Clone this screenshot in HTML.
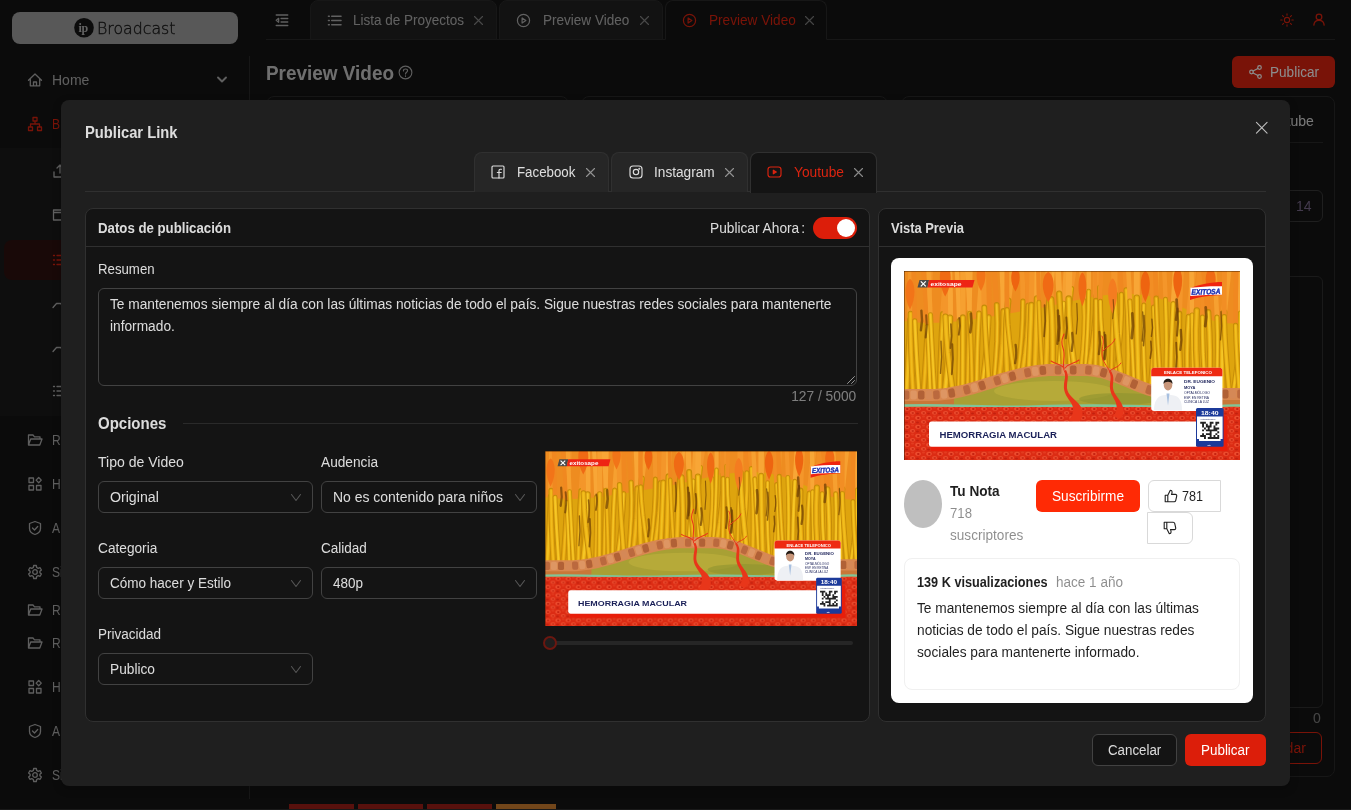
<!DOCTYPE html>
<html lang="es">
<head>
<meta charset="utf-8">
<title>Publicar Link</title>
<style>
*{box-sizing:border-box;margin:0;padding:0}
html,body{width:1351px;height:811px;overflow:hidden;background:#141414}
body{will-change:transform;font-family:"Liberation Sans",sans-serif;font-size:14px;color:rgba(255,255,255,.85);position:relative}
svg{display:block;overflow:visible}
.t{position:absolute;white-space:nowrap;line-height:22px;font-size:14px;transform-origin:0 0}
.ic{position:absolute;fill:none;stroke:currentColor;stroke-width:1.3;stroke-linecap:round;stroke-linejoin:round}
/* ---------- page behind ---------- */
#page{position:absolute;left:0;top:0;width:1351px;height:811px;background:#141414;color:rgba(255,255,255,.65)}
#side{position:absolute;left:0;top:0;width:250px;height:799px}
#sideb{position:absolute;left:249px;top:56px;width:1px;height:743px;background:#2b2b2b}
#logo{position:absolute;left:12px;top:12px;width:226px;height:32px;border-radius:8px;background:#a0a0a0;color:#141414}
#sub{position:absolute;left:0;top:148px;width:249px;height:268px;background:#1a1a1a}
#sel{position:absolute;left:4px;top:240px;width:241px;height:40px;border-radius:8px;background:#2f1210}
.mi{position:absolute;left:0;width:249px;height:40px}
.mi .ic{left:27px;top:12px;width:16px;height:16px}
.mi .t{left:52px;top:9px}
.si .ic{left:52px}
.red{color:#dc2410}
#hdr{position:absolute;left:266px;top:0;width:1069px;height:40px;border-bottom:1px solid #2b2b2b}
.tab{position:absolute;top:0;height:40px;border:1px solid #2b2b2b;border-radius:8px 8px 0 0;background:#212121}
.tab.act{background:#141414;border-bottom-color:#141414}
.tab .ic{top:12px;width:15px;height:15px}
.tab .t{top:8px}
.bcard{position:absolute;top:96px;height:681px;border:1px solid #2b2b2b;border-radius:8px;background:#141414}
#pubbtn{position:absolute;left:1232px;top:56px;width:103px;height:32px;border-radius:6px;background:#dc2410;color:#fff}
#mask{position:absolute;left:0;top:0;width:1351px;height:811px;background:rgba(0,0,0,.45)}
#bot1{position:absolute;left:0;top:809px;width:1351px;height:1px;background:#1a1a1a}
#bot2{position:absolute;left:0;top:810px;width:1351px;height:1px;background:#fff}
</style>
<style>
.T3,.T4,.T5,.T6,.T7,.T8,.T9,.T10,.T11,.T12{transform:scaleX(.86)}
.T1{transform:scaleX(1.0170)}
.T29{transform:scaleX(0.9800)}
.T13{transform:scaleX(0.9638)}
.T14{transform:scaleX(0.9669)}
.T15{transform:scaleX(0.9725)}
.T16{transform:scaleX(0.9463)}
.T17{transform:scaleX(0.9685)}
.T22{transform:scaleX(0.9197)}
.T23{transform:scaleX(0.9498)}
.T24{transform:scaleX(0.9751)}
.T25{transform:scaleX(0.9828)}
.T26{transform:scaleX(0.9445)}
.T27{transform:scaleX(0.9799)}
.T28{transform:scaleX(0.9446)}
.T30{transform:scaleX(0.9823)}
.T31{transform:scaleX(0.9382)}
.T32{transform:scaleX(1.0020)}
.T33{transform:scaleX(1.0114)}
.T34{transform:scaleX(0.9779)}
.T35{transform:scaleX(0.9973)}
.T36{transform:scaleX(0.9769)}
.T37{transform:scaleX(0.9658)}
.T38{transform:scaleX(0.9645)}
.T39{transform:scaleX(0.9629)}
.T40{transform:scaleX(0.9637)}
.T41{transform:scaleX(0.9799)}
.T42{transform:scaleX(0.9224)}
.T43{transform:scaleX(0.9083)}
.T44{transform:scaleX(0.9418)}
.T45{transform:scaleX(0.9713)}
.T46{transform:scaleX(0.9742)}
.T47{transform:scaleX(0.8990)}
.T48{transform:scaleX(0.9064)}
.T49{transform:scaleX(0.9669)}
.T50{transform:scaleX(0.9794)}
.T51{transform:scaleX(0.9513)}
.T52{transform:scaleX(0.9586)}
</style>
</head>
<body>
<div id="page">
  <div id="side">
    <div id="sideb"></div>
    <div id="logo">
      <svg class="ic" style="left:62px;top:6px;width:20px;height:20px;stroke:none" viewBox="0 0 20 20"><circle cx="10" cy="9.800" r="9.800" fill="#161616"/></svg>
      <span class="t T0" style="left:66.500px;top:5px;font-family:'Liberation Serif',serif;font-size:12px;font-weight:bold;color:#b4b4b4;letter-spacing:-.3px">ip</span>
      <span class="t T1" id="brand" style="left:84.500px;top:6px;font-family:'DejaVu Sans','Liberation Sans',sans-serif;font-weight:200;font-size:15.500px;color:#1c1c1c;-webkit-text-stroke:.35px #1c1c1c">Broadcast</span>
    </div>
    <div id="sub"></div>
    <div id="sel"></div>
    <div class="mi" style="top:60px">
      <svg class="ic" viewBox="0 0 16 16"><path d="M1.5 8.2 8 2l6.500 6.200M3.300 7v6.800h9.400V7M6.500 13.800V10h3v3.800"/></svg>
      <span class="t T2">Home</span>
      <svg class="ic" style="left:217px;top:16px;width:10px;height:8px;stroke-width:1.9" viewBox="0 0 10 8"><path d="M1 1.500 5 5.500 9 1.500"/></svg>
    </div>
    <div class="mi red" style="top:104px">
      <svg class="ic" viewBox="0 0 16 16"><path d="M6 1.500h4v3.500H6zM1.500 11h4v3.500h-4zM10.500 11h4v3.500h-4zM8 5v3M3.500 11V8h9v3"/></svg>
      <span class="t T3">B</span>
    </div>
    <div class="mi si" style="top:151px"><svg class="ic" viewBox="0 0 16 16"><path d="M2 9v5h12V9M8 10V2M5 5l3-3 3 3"/></svg></div>
    <div class="mi si" style="top:195px"><svg class="ic" viewBox="0 0 16 16"><path d="M1.500 3h13v10h-13zM1.500 5.500h13"/></svg></div>
    <div class="mi si red" style="top:240px"><svg class="ic" viewBox="0 0 16 16"><path d="M5 3.500h10M5 8h10M5 12.500h10M1.500 3.500h1M1.500 8h1M1.500 12.500h1"/></svg></div>
    <div class="mi si" style="top:284px"><svg class="ic" viewBox="0 0 16 16"><path d="M1 11.500 4.500 7.500h4l2.500 2.500 4-4.500"/></svg></div>
    <div class="mi si" style="top:328px"><svg class="ic" viewBox="0 0 16 16"><path d="M1 11.500 4.500 7.500h4l2.500 2.500 4-4.500"/></svg></div>
    <div class="mi si" style="top:371px"><svg class="ic" viewBox="0 0 16 16"><path d="M5 3.500h10M5 8h10M5 12.500h10M1.500 3.500h1M1.500 8h1M1.500 12.500h1"/></svg></div>
    <div class="mi" style="top:420px"><svg class="ic" viewBox="0 0 16 16"><path d="M1.500 13V3h4.500l1.500 1.800h5.500V7M1.500 13l2.200-6h11.300l-2.200 6z"/></svg><span class="t T4">R</span></div>
    <div class="mi" style="top:464px"><svg class="ic" viewBox="0 0 16 16"><path d="M2 2h4.500v4.500H2zM2 9.500h4.500V14H2zM9.500 9.500H14V14H9.500zM11.700 1.500l2.600 2.600-2.600 2.600-2.600-2.600z"/></svg><span class="t T5">H</span></div>
    <div class="mi" style="top:508px"><svg class="ic" viewBox="0 0 16 16"><path d="M8 1.500 2.500 3.500v5c0 3 2.500 5 5.500 6 3-1 5.500-3 5.500-6v-5zM5.500 8l2 2 3.200-3.500"/></svg><span class="t T6">A</span></div>
    <div class="mi" style="top:552px"><svg class="ic" viewBox="0 0 16 16"><circle cx="8" cy="8" r="2.300"/><path d="M6.700 1.500h2.600l.4 2 1.500.9 1.900-.7 1.300 2.300-1.500 1.300v1.400l1.500 1.300-1.300 2.300-1.900-.7-1.500.9-.4 2H6.700l-.4-2-1.500-.9-1.900.7-1.300-2.300 1.500-1.300V7.300L1.600 6l1.300-2.300 1.900.7 1.500-.9z"/></svg><span class="t T7">Si</span></div>
    <div class="mi" style="top:590px"><svg class="ic" viewBox="0 0 16 16"><path d="M1.500 13V3h4.500l1.500 1.800h5.500V7M1.500 13l2.200-6h11.300l-2.200 6z"/></svg><span class="t T8">R</span></div>
    <div class="mi" style="top:623px"><svg class="ic" viewBox="0 0 16 16"><path d="M1.500 13V3h4.500l1.500 1.800h5.500V7M1.500 13l2.200-6h11.300l-2.200 6z"/></svg><span class="t T9">R</span></div>
    <div class="mi" style="top:667px"><svg class="ic" viewBox="0 0 16 16"><path d="M2 2h4.500v4.500H2zM2 9.500h4.500V14H2zM9.500 9.500H14V14H9.500zM11.700 1.500l2.600 2.600-2.600 2.600-2.600-2.600z"/></svg><span class="t T10">H</span></div>
    <div class="mi" style="top:711px"><svg class="ic" viewBox="0 0 16 16"><path d="M8 1.500 2.500 3.500v5c0 3 2.500 5 5.500 6 3-1 5.500-3 5.500-6v-5zM5.500 8l2 2 3.200-3.500"/></svg><span class="t T11">A</span></div>
    <div class="mi" style="top:755px"><svg class="ic" viewBox="0 0 16 16"><circle cx="8" cy="8" r="2.300"/><path d="M6.700 1.500h2.600l.4 2 1.500.9 1.900-.7 1.300 2.300-1.500 1.300v1.400l1.500 1.300-1.300 2.300-1.900-.7-1.500.9-.4 2H6.700l-.4-2-1.500-.9-1.900.7-1.300-2.300 1.500-1.300V7.300L1.600 6l1.300-2.300 1.900.7 1.500-.9z"/></svg><span class="t T12">Si</span></div>
  </div>
  <div id="hdr">
    <svg class="ic" style="left:9px;top:14px;width:14px;height:12.500px;stroke-width:1.400" viewBox="0 0 14 13"><path d="M1 1h12M6 4.700h7M6 8.300h7M1 12h12M3.500 4.500 1 6.500l2.500 2z"/></svg>
    <div class="tab" style="left:44px;width:187px">
      <svg class="ic" style="left:16px;stroke-width:1.500" viewBox="0 0 16 16"><path d="M5 3.500h10M5 8h10M5 12.500h10M1.500 3.500h1M1.500 8h1M1.500 12.500h1"/></svg>
      <span class="t T13" style="left:42px">Lista de Proyectos</span>
      <svg class="ic" style="left:163px;top:15px;width:9px;height:9px;color:rgba(255,255,255,.45);stroke-width:1.1" viewBox="0 0 9 9"><path d="M.5.500l8 8M8.500.500l-8 8"/></svg>
    </div>
    <div class="tab" style="left:233px;width:164px">
      <svg class="ic" style="left:16px" viewBox="0 0 16 16"><circle cx="8" cy="8" r="6.500"/><path d="M6.500 5.300v5.400L10.500 8z"/></svg>
      <span class="t T14" style="left:43px">Preview Video</span>
      <svg class="ic" style="left:140px;top:15px;width:9px;height:9px;color:rgba(255,255,255,.45);stroke-width:1.1" viewBox="0 0 9 9"><path d="M.5.500l8 8M8.500.500l-8 8"/></svg>
    </div>
    <div class="tab act" style="left:399px;width:162px">
      <svg class="ic red" style="left:16px" viewBox="0 0 16 16"><circle cx="8" cy="8" r="6.500"/><path d="M6.500 5.300v5.400L10.500 8z"/></svg>
      <span class="t T15 red" style="left:43px">Preview Video</span>
      <svg class="ic" style="left:139px;top:15px;width:9px;height:9px;color:rgba(255,255,255,.45);stroke-width:1.1" viewBox="0 0 9 9"><path d="M.5.500l8 8M8.500.500l-8 8"/></svg>
    </div>
    <svg class="ic red" style="left:1014px;top:13px;width:14px;height:14px;stroke-width:1.250" viewBox="0 0 16 16"><circle cx="8" cy="8" r="3"/><path d="M8 .800v1.700M8 13.500v1.700M.800 8h1.700M13.500 8h1.700M2.900 2.900l1.200 1.200M11.900 11.900l1.200 1.200M2.900 13.100l1.200-1.200M11.900 4.100l1.200-1.200"/></svg>
    <svg class="ic red" style="left:1047px;top:13px;width:12px;height:13px;stroke-width:1.500" viewBox="0 0 14 15"><circle cx="7" cy="4.500" r="3.300"/><path d="M1 14c.3-3.500 2.800-5.500 6-5.500s5.700 2 6 5.500"/></svg>
  </div>
  <span class="t T16" id="h1" style="left:266px;top:59px;font-size:20px;line-height:28px;font-weight:bold;color:rgba(255,255,255,.78)">Preview Video</span>
  <svg class="ic" style="left:398px;top:65px;width:15px;height:15px;stroke-width:1.200" viewBox="0 0 16 16"><circle cx="8" cy="8" r="6.800"/><path d="M5.800 6.300c0-1.300 1-2.100 2.200-2.100s2.200.8 2.200 2c0 1.500-2.200 1.600-2.200 3.300M8 11.500v.6"/></svg>
  <div id="pubbtn">
    <svg class="ic" style="left:17px;top:9px;width:13px;height:14px;stroke-width:1.200" viewBox="0 0 13 14"><circle cx="10.500" cy="2.500" r="1.800"/><circle cx="2.500" cy="7" r="1.800"/><circle cx="10.500" cy="11.500" r="1.800"/><path d="M4.100 6.100l4.800-2.700M4.100 7.900l4.800 2.700"/></svg>
    <span class="t T17" style="left:38px;top:5px">Publicar</span>
  </div>
  <div class="bcard" style="left:266px;width:303px"></div>
  <div class="bcard" style="left:581px;width:307px"></div>
  <div class="bcard" style="left:901px;width:434px">
    <span class="t T18" style="left:361px;top:13px;color:rgba(255,255,255,.85)">Youtube</span>
    <div style="position:absolute;left:12px;top:45px;width:409px;height:1px;background:#2b2b2b"></div>
    <div style="position:absolute;left:300px;top:93px;width:121px;height:32px;border:1px solid #3a3a3a;border-radius:6px"></div>
    <span class="t T19" style="left:394px;top:98px;color:#7a6a8c">14</span>
    <div style="position:absolute;left:12px;top:179px;width:409px;height:432px;border:1px solid #303030;border-radius:6px"></div>
    <span class="t T20" style="left:411px;top:610px;color:rgba(255,255,255,.45)">0</span>
    <div style="position:absolute;left:329px;top:635px;width:91px;height:32px;border:1px solid #dc2410;border-radius:6px"></div>
    <span class="t T21 red" style="left:352.500px;top:640px">Guardar</span>
  </div>
  <div style="position:absolute;left:289px;top:804px;width:65px;height:5px;background:#a02018"></div>
  <div style="position:absolute;left:358px;top:804px;width:65px;height:5px;background:#a02018"></div>
  <div style="position:absolute;left:427px;top:804px;width:65px;height:5px;background:#a02018"></div>
  <div style="position:absolute;left:496px;top:804px;width:60px;height:5px;background:#d08030"></div>
</div>
<div id="mask"></div>
<div id="bot1"></div><div id="bot2"></div>
<svg width="0" height="0" style="position:absolute"><defs>
<pattern id="cells" width="11" height="9" patternUnits="userSpaceOnUse"><rect width="11" height="9" fill="#dc2c14"/><ellipse cx="3" cy="2.800" rx="2.800" ry="2" fill="#ec4c2e"/><ellipse cx="3.300" cy="3" rx="1.300" ry=".9" fill="#c4200e"/><ellipse cx="8.500" cy="6.800" rx="2.600" ry="1.900" fill="#ea4a2c"/><ellipse cx="8.800" cy="7" rx="1.200" ry=".8" fill="#c4200e"/><ellipse cx="8.500" cy="1.500" rx="1.500" ry="1" fill="#e43c20"/><ellipse cx="2.500" cy="7.500" rx="1.500" ry="1" fill="#c4200e"/></pattern>
<clipPath id="vclip"><rect width="336" height="189"/></clipPath>
<symbol id="vid" viewBox="0 0 336 189">
<g clip-path="url(#vclip)">
<rect width="336" height="189" fill="#dea40e"/>
<path d="M0 0H336V52C300 56 280 30 240 24S160 34 120 40 40 56 0 50z" fill="#ee8c20"/>
<path d="M-1.6 -2.0 -2.9 26.2 -3.7 52.3" stroke="#f28e24" stroke-width="5.1" fill="none"/>
<path d="M-3.7 52.3L-3.8 69.0L-3.7 85.6L-3.4 102.2L-3.0 118.8" stroke="#c68c08" stroke-width="5.7" fill="none" stroke-linecap="round"/>
<path d="M-3.7 52.3L-3.8 69.0L-3.7 85.6L-3.4 102.2L-3.0 118.8" stroke="#ecb214" stroke-width="3.7" fill="none" stroke-linecap="round"/>
<path d="M-3.7 52.3L-3.8 69.0L-3.7 85.6L-3.4 102.2L-3.0 118.8" stroke="#f6c826" stroke-width="1.7" fill="none" stroke-linecap="round" opacity=".75"/>
<path d="M7.6 -2.0 7.0 24.6 6.3 49.1" stroke="#f6a030" stroke-width="6.0" fill="none"/>
<path d="M6.3 49.1L5.6 66.5L4.7 83.9L3.7 101.3L2.6 118.7" stroke="#c68c08" stroke-width="6.6" fill="none" stroke-linecap="round"/>
<path d="M6.3 49.1L5.6 66.5L4.7 83.9L3.7 101.3L2.6 118.7" stroke="#e8aa10" stroke-width="4.4" fill="none" stroke-linecap="round"/>
<path d="M6.3 49.1L5.6 66.5L4.7 83.9L3.7 101.3L2.6 118.7" stroke="#f6c826" stroke-width="2.1" fill="none" stroke-linecap="round" opacity=".75"/>
<path d="M7.8 -2.0 7.0 21.3 6.6 42.7" stroke="#f4962a" stroke-width="5.2" fill="none"/>
<path d="M6.6 42.7L6.6 62.1L7.1 81.5L7.9 100.9L9.0 120.2" stroke="#c68c08" stroke-width="5.8" fill="none" stroke-linecap="round"/>
<path d="M6.6 42.7L6.6 62.1L7.1 81.5L7.9 100.9L9.0 120.2" stroke="#e8aa10" stroke-width="3.8" fill="none" stroke-linecap="round"/>
<path d="M6.6 42.7L6.6 62.1L7.1 81.5L7.9 100.9L9.0 120.2" stroke="#f4c222" stroke-width="1.8" fill="none" stroke-linecap="round" opacity=".75"/>
<path d="M9.6 -2.0 10.1 25.0 10.8 49.9" stroke="#f08820" stroke-width="4.6" fill="none"/>
<path d="M10.8 49.9L11.6 67.2L12.5 84.5L13.6 101.8L14.7 119.1" stroke="#c68c08" stroke-width="5.2" fill="none" stroke-linecap="round"/>
<path d="M10.8 49.9L11.6 67.2L12.5 84.5L13.6 101.8L14.7 119.1" stroke="#f0b818" stroke-width="3.3" fill="none" stroke-linecap="round"/>
<path d="M10.8 49.9L11.6 67.2L12.5 84.5L13.6 101.8L14.7 119.1" stroke="#f8ce2e" stroke-width="1.6" fill="none" stroke-linecap="round" opacity=".75"/>
<path d="M26.1 -2.0 25.1 24.7 24.0 49.3" stroke="#f4962a" stroke-width="5.5" fill="none"/>
<path d="M24.0 49.3L23.1 67.0L22.1 84.8L20.9 102.5L19.7 120.2" stroke="#c68c08" stroke-width="6.1" fill="none" stroke-linecap="round"/>
<path d="M24.0 49.3L23.1 67.0L22.1 84.8L20.9 102.5L19.7 120.2" stroke="#e4a40e" stroke-width="3.9" fill="none" stroke-linecap="round"/>
<path d="M24.0 49.3L23.1 67.0L22.1 84.8L20.9 102.5L19.7 120.2" stroke="#f4c222" stroke-width="1.9" fill="none" stroke-linecap="round" opacity=".75"/>
<path d="M19.2 -2.0 21.5 27.7 23.4 55.4" stroke="#f08820" stroke-width="4.4" fill="none"/>
<path d="M23.4 55.4L24.3 71.6L25.0 87.7L25.6 103.9L26.1 120.1" stroke="#c68c08" stroke-width="5.0" fill="none" stroke-linecap="round"/>
<path d="M23.4 55.4L24.3 71.6L25.0 87.7L25.6 103.9L26.1 120.1" stroke="#ecb214" stroke-width="3.2" fill="none" stroke-linecap="round"/>
<path d="M23.4 55.4L24.3 71.6L25.0 87.7L25.6 103.9L26.1 120.1" stroke="#f8ce2e" stroke-width="1.5" fill="none" stroke-linecap="round" opacity=".75"/>
<path d="M24.5 -2.0 25.5 21.8 26.5 43.7" stroke="#f6a030" stroke-width="4.4" fill="none"/>
<path d="M26.5 43.7L27.4 62.4L28.4 81.2L29.4 100.0L30.5 118.8" stroke="#c68c08" stroke-width="5.0" fill="none" stroke-linecap="round"/>
<path d="M26.5 43.7L27.4 62.4L28.4 81.2L29.4 100.0L30.5 118.8" stroke="#ecb214" stroke-width="3.2" fill="none" stroke-linecap="round"/>
<path d="M26.5 43.7L27.4 62.4L28.4 81.2L29.4 100.0L30.5 118.8" stroke="#f8ce2e" stroke-width="1.5" fill="none" stroke-linecap="round" opacity=".75"/>
<path d="M42.5 -2.0 40.5 21.6 39.0 43.2" stroke="#f4962a" stroke-width="5.6" fill="none"/>
<path d="M39.0 43.2L37.8 62.4L37.0 81.5L36.3 100.6L35.8 119.8" stroke="#c68c08" stroke-width="6.2" fill="none" stroke-linecap="round"/>
<path d="M39.0 43.2L37.8 62.4L37.0 81.5L36.3 100.6L35.8 119.8" stroke="#e4a40e" stroke-width="4.0" fill="none" stroke-linecap="round"/>
<path d="M39.0 43.2L37.8 62.4L37.0 81.5L36.3 100.6L35.8 119.8" stroke="#f6c826" stroke-width="1.9" fill="none" stroke-linecap="round" opacity=".75"/>
<path d="M45.1 -2.0 45.8 23.4 45.9 46.8" stroke="#f8a636" stroke-width="6.2" fill="none"/>
<path d="M45.9 46.8L45.4 65.0L44.4 83.2L42.9 101.4L41.1 119.6" stroke="#c68c08" stroke-width="6.8" fill="none" stroke-linecap="round"/>
<path d="M45.9 46.8L45.4 65.0L44.4 83.2L42.9 101.4L41.1 119.6" stroke="#ecb214" stroke-width="4.4" fill="none" stroke-linecap="round"/>
<path d="M45.9 46.8L45.4 65.0L44.4 83.2L42.9 101.4L41.1 119.6" stroke="#f8ce2e" stroke-width="2.1" fill="none" stroke-linecap="round" opacity=".75"/>
<path d="M41.6 -2.0 41.2 22.8 41.4 45.5" stroke="#f4962a" stroke-width="5.5" fill="none"/>
<path d="M41.4 45.5L42.3 63.6L43.8 81.7L45.9 99.8L48.4 117.9" stroke="#c68c08" stroke-width="6.1" fill="none" stroke-linecap="round"/>
<path d="M41.4 45.5L42.3 63.6L43.8 81.7L45.9 99.8L48.4 117.9" stroke="#ecb214" stroke-width="4.0" fill="none" stroke-linecap="round"/>
<path d="M41.4 45.5L42.3 63.6L43.8 81.7L45.9 99.8L48.4 117.9" stroke="#f4c222" stroke-width="1.9" fill="none" stroke-linecap="round" opacity=".75"/>
<path d="M52.8 -2.0 54.3 24.8 55.2 49.6" stroke="#f8a636" stroke-width="4.5" fill="none"/>
<path d="M55.2 49.6L55.4 66.5L55.3 83.5L55.0 100.4L54.5 117.4" stroke="#c68c08" stroke-width="5.1" fill="none" stroke-linecap="round"/>
<path d="M55.2 49.6L55.4 66.5L55.3 83.5L55.0 100.4L54.5 117.4" stroke="#e4a40e" stroke-width="3.3" fill="none" stroke-linecap="round"/>
<path d="M55.2 49.6L55.4 66.5L55.3 83.5L55.0 100.4L54.5 117.4" stroke="#f4c222" stroke-width="1.5" fill="none" stroke-linecap="round" opacity=".75"/>
<path d="M58.9 -2.0 58.9 23.2 58.9 46.3" stroke="#f6a030" stroke-width="5.3" fill="none"/>
<path d="M58.9 46.3L58.8 63.5L58.8 80.8L58.7 98.0L58.6 115.2" stroke="#c68c08" stroke-width="5.9" fill="none" stroke-linecap="round"/>
<path d="M58.9 46.3L58.8 63.5L58.8 80.8L58.7 98.0L58.6 115.2" stroke="#eaae12" stroke-width="3.8" fill="none" stroke-linecap="round"/>
<path d="M58.9 46.3L58.8 63.5L58.8 80.8L58.7 98.0L58.6 115.2" stroke="#f6c826" stroke-width="1.8" fill="none" stroke-linecap="round" opacity=".75"/>
<path d="M66.4 -2.0 65.8 20.6 65.3 41.1" stroke="#f8a636" stroke-width="4.6" fill="none"/>
<path d="M65.3 41.1L64.9 59.4L64.4 77.6L64.0 95.8L63.6 114.0" stroke="#c68c08" stroke-width="5.2" fill="none" stroke-linecap="round"/>
<path d="M65.3 41.1L64.9 59.4L64.4 77.6L64.0 95.8L63.6 114.0" stroke="#e4a40e" stroke-width="3.3" fill="none" stroke-linecap="round"/>
<path d="M65.3 41.1L64.9 59.4L64.4 77.6L64.0 95.8L63.6 114.0" stroke="#f4c222" stroke-width="1.6" fill="none" stroke-linecap="round" opacity=".75"/>
<path d="M63.0 -2.0 64.5 21.1 65.7 42.2" stroke="#f8a636" stroke-width="4.3" fill="none"/>
<path d="M65.7 42.2L66.6 60.2L67.2 78.1L67.7 96.1L68.1 114.0" stroke="#c68c08" stroke-width="4.9" fill="none" stroke-linecap="round"/>
<path d="M65.7 42.2L66.6 60.2L67.2 78.1L67.7 96.1L68.1 114.0" stroke="#e8aa10" stroke-width="3.1" fill="none" stroke-linecap="round"/>
<path d="M65.7 42.2L66.6 60.2L67.2 78.1L67.7 96.1L68.1 114.0" stroke="#f4c222" stroke-width="1.4" fill="none" stroke-linecap="round" opacity=".75"/>
<path d="M78.4 -2.0 76.5 21.2 75.0 42.4" stroke="#f6a030" stroke-width="5.1" fill="none"/>
<path d="M75.0 42.4L74.1 59.8L73.4 77.2L73.0 94.6L72.7 112.0" stroke="#c68c08" stroke-width="5.7" fill="none" stroke-linecap="round"/>
<path d="M75.0 42.4L74.1 59.8L73.4 77.2L73.0 94.6L72.7 112.0" stroke="#e8aa10" stroke-width="3.7" fill="none" stroke-linecap="round"/>
<path d="M75.0 42.4L74.1 59.8L73.4 77.2L73.0 94.6L72.7 112.0" stroke="#f8ce2e" stroke-width="1.7" fill="none" stroke-linecap="round" opacity=".75"/>
<path d="M84.5 -2.0 85.0 23.1 84.7 46.2" stroke="#f08820" stroke-width="5.2" fill="none"/>
<path d="M84.7 46.2L83.9 62.0L82.5 77.9L80.8 93.7L78.8 109.5" stroke="#c68c08" stroke-width="5.8" fill="none" stroke-linecap="round"/>
<path d="M84.7 46.2L83.9 62.0L82.5 77.9L80.8 93.7L78.8 109.5" stroke="#e8aa10" stroke-width="3.8" fill="none" stroke-linecap="round"/>
<path d="M84.7 46.2L83.9 62.0L82.5 77.9L80.8 93.7L78.8 109.5" stroke="#f8ce2e" stroke-width="1.8" fill="none" stroke-linecap="round" opacity=".75"/>
<path d="M79.5 -2.0 79.8 18.3 80.3 36.5" stroke="#f4962a" stroke-width="5.2" fill="none"/>
<path d="M80.3 36.5L81.0 54.7L82.0 72.9L83.3 91.0L84.6 109.2" stroke="#c68c08" stroke-width="5.8" fill="none" stroke-linecap="round"/>
<path d="M80.3 36.5L81.0 54.7L82.0 72.9L83.3 91.0L84.6 109.2" stroke="#ecb214" stroke-width="3.7" fill="none" stroke-linecap="round"/>
<path d="M80.3 36.5L81.0 54.7L82.0 72.9L83.3 91.0L84.6 109.2" stroke="#f4c222" stroke-width="1.8" fill="none" stroke-linecap="round" opacity=".75"/>
<path d="M89.9 -2.0 91.6 16.9 92.7 33.8" stroke="#f08820" stroke-width="5.1" fill="none"/>
<path d="M92.7 33.8L93.3 52.1L93.0 70.4L91.9 88.7L90.5 107.0" stroke="#c68c08" stroke-width="5.7" fill="none" stroke-linecap="round"/>
<path d="M92.7 33.8L93.3 52.1L93.0 70.4L91.9 88.7L90.5 107.0" stroke="#e4a40e" stroke-width="3.7" fill="none" stroke-linecap="round"/>
<path d="M92.7 33.8L93.3 52.1L93.0 70.4L91.9 88.7L90.5 107.0" stroke="#f8ce2e" stroke-width="1.7" fill="none" stroke-linecap="round" opacity=".75"/>
<path d="M98.6 -2.0 99.5 20.2 99.7 40.4" stroke="#f8a636" stroke-width="6.2" fill="none"/>
<path d="M99.7 40.4L99.4 56.5L98.5 72.5L97.2 88.5L95.6 104.5" stroke="#c68c08" stroke-width="6.8" fill="none" stroke-linecap="round"/>
<path d="M99.7 40.4L99.4 56.5L98.5 72.5L97.2 88.5L95.6 104.5" stroke="#e4a40e" stroke-width="4.5" fill="none" stroke-linecap="round"/>
<path d="M99.7 40.4L99.4 56.5L98.5 72.5L97.2 88.5L95.6 104.5" stroke="#f4c222" stroke-width="2.1" fill="none" stroke-linecap="round" opacity=".75"/>
<path d="M108.6 -2.0 106.1 14.8 104.2 29.7" stroke="#f6a030" stroke-width="5.9" fill="none"/>
<path d="M104.2 29.7L102.6 47.5L102.0 65.3L102.3 83.1L103.0 101.0" stroke="#c68c08" stroke-width="6.5" fill="none" stroke-linecap="round"/>
<path d="M104.2 29.7L102.6 47.5L102.0 65.3L102.3 83.1L103.0 101.0" stroke="#eaae12" stroke-width="4.2" fill="none" stroke-linecap="round"/>
<path d="M104.2 29.7L102.6 47.5L102.0 65.3L102.3 83.1L103.0 101.0" stroke="#f4c222" stroke-width="2.0" fill="none" stroke-linecap="round" opacity=".75"/>
<path d="M102.9 -2.0 102.8 19.4 103.1 38.7" stroke="#f08820" stroke-width="4.8" fill="none"/>
<path d="M103.1 38.7L104.0 54.0L105.5 69.3L107.4 84.5L109.6 99.8" stroke="#c68c08" stroke-width="5.4" fill="none" stroke-linecap="round"/>
<path d="M103.1 38.7L104.0 54.0L105.5 69.3L107.4 84.5L109.6 99.8" stroke="#e8aa10" stroke-width="3.5" fill="none" stroke-linecap="round"/>
<path d="M103.1 38.7L104.0 54.0L105.5 69.3L107.4 84.5L109.6 99.8" stroke="#f6c826" stroke-width="1.6" fill="none" stroke-linecap="round" opacity=".75"/>
<path d="M118.3 -2.0 118.7 15.1 118.9 30.2" stroke="#f4962a" stroke-width="4.8" fill="none"/>
<path d="M118.9 30.2L118.6 47.6L117.7 65.1L116.2 82.5L114.4 100.0" stroke="#c68c08" stroke-width="5.4" fill="none" stroke-linecap="round"/>
<path d="M118.9 30.2L118.6 47.6L117.7 65.1L116.2 82.5L114.4 100.0" stroke="#e4a40e" stroke-width="3.4" fill="none" stroke-linecap="round"/>
<path d="M118.9 30.2L118.6 47.6L117.7 65.1L116.2 82.5L114.4 100.0" stroke="#f6c826" stroke-width="1.6" fill="none" stroke-linecap="round" opacity=".75"/>
<path d="M123.1 -2.0 124.2 17.3 124.6 34.6" stroke="#f28e24" stroke-width="5.7" fill="none"/>
<path d="M124.6 34.6L124.2 50.6L123.1 66.5L121.2 82.5L118.9 98.5" stroke="#c68c08" stroke-width="6.3" fill="none" stroke-linecap="round"/>
<path d="M124.6 34.6L124.2 50.6L123.1 66.5L121.2 82.5L118.9 98.5" stroke="#e8aa10" stroke-width="4.1" fill="none" stroke-linecap="round"/>
<path d="M124.6 34.6L124.2 50.6L123.1 66.5L121.2 82.5L118.9 98.5" stroke="#f4c222" stroke-width="1.9" fill="none" stroke-linecap="round" opacity=".75"/>
<path d="M128.5 -2.0 128.0 17.0 127.4 34.0" stroke="#f4962a" stroke-width="5.9" fill="none"/>
<path d="M127.4 34.0L126.9 49.6L126.3 65.1L125.6 80.6L124.9 96.2" stroke="#c68c08" stroke-width="6.5" fill="none" stroke-linecap="round"/>
<path d="M127.4 34.0L126.9 49.6L126.3 65.1L125.6 80.6L124.9 96.2" stroke="#e8aa10" stroke-width="4.2" fill="none" stroke-linecap="round"/>
<path d="M127.4 34.0L126.9 49.6L126.3 65.1L125.6 80.6L124.9 96.2" stroke="#f6c826" stroke-width="2.0" fill="none" stroke-linecap="round" opacity=".75"/>
<path d="M133.8 -2.0 133.4 13.8 133.1 27.5" stroke="#f8a636" stroke-width="6.1" fill="none"/>
<path d="M133.1 27.5L132.6 44.5L132.1 61.4L131.6 78.3L131.0 95.2" stroke="#c68c08" stroke-width="6.7" fill="none" stroke-linecap="round"/>
<path d="M133.1 27.5L132.6 44.5L132.1 61.4L131.6 78.3L131.0 95.2" stroke="#e8aa10" stroke-width="4.4" fill="none" stroke-linecap="round"/>
<path d="M133.1 27.5L132.6 44.5L132.1 61.4L131.6 78.3L131.0 95.2" stroke="#f4c222" stroke-width="2.1" fill="none" stroke-linecap="round" opacity=".75"/>
<path d="M134.2 -2.0 134.5 15.5 134.9 31.1" stroke="#f08820" stroke-width="4.2" fill="none"/>
<path d="M134.9 31.1L135.5 47.3L136.2 63.6L137.1 79.8L138.1 96.1" stroke="#c68c08" stroke-width="4.8" fill="none" stroke-linecap="round"/>
<path d="M134.9 31.1L135.5 47.3L136.2 63.6L137.1 79.8L138.1 96.1" stroke="#e8aa10" stroke-width="3.0" fill="none" stroke-linecap="round"/>
<path d="M134.9 31.1L135.5 47.3L136.2 63.6L137.1 79.8L138.1 96.1" stroke="#f4c222" stroke-width="1.4" fill="none" stroke-linecap="round" opacity=".75"/>
<path d="M148.1 -2.0 146.7 14.6 145.5 29.2" stroke="#f8a636" stroke-width="6.0" fill="none"/>
<path d="M145.5 29.2L144.3 45.6L143.4 61.9L142.8 78.3L142.2 94.6" stroke="#c68c08" stroke-width="6.6" fill="none" stroke-linecap="round"/>
<path d="M145.5 29.2L144.3 45.6L143.4 61.9L142.8 78.3L142.2 94.6" stroke="#eaae12" stroke-width="4.3" fill="none" stroke-linecap="round"/>
<path d="M145.5 29.2L144.3 45.6L143.4 61.9L142.8 78.3L142.2 94.6" stroke="#f4c222" stroke-width="2.0" fill="none" stroke-linecap="round" opacity=".75"/>
<path d="M144.3 -2.0 145.8 14.2 147.0 28.5" stroke="#f4962a" stroke-width="6.2" fill="none"/>
<path d="M147.0 28.5L148.0 45.0L148.5 61.4L148.7 77.9L148.6 94.4" stroke="#c68c08" stroke-width="6.8" fill="none" stroke-linecap="round"/>
<path d="M147.0 28.5L148.0 45.0L148.5 61.4L148.7 77.9L148.6 94.4" stroke="#e8aa10" stroke-width="4.4" fill="none" stroke-linecap="round"/>
<path d="M147.0 28.5L148.0 45.0L148.5 61.4L148.7 77.9L148.6 94.4" stroke="#f6c826" stroke-width="2.1" fill="none" stroke-linecap="round" opacity=".75"/>
<path d="M161.8 -2.0 160.7 16.1 159.7 32.1" stroke="#f6a030" stroke-width="4.3" fill="none"/>
<path d="M159.7 32.1L158.6 48.0L157.4 63.9L156.2 79.8L155.0 95.7" stroke="#c68c08" stroke-width="4.9" fill="none" stroke-linecap="round"/>
<path d="M159.7 32.1L158.6 48.0L157.4 63.9L156.2 79.8L155.0 95.7" stroke="#f0b818" stroke-width="3.1" fill="none" stroke-linecap="round"/>
<path d="M159.7 32.1L158.6 48.0L157.4 63.9L156.2 79.8L155.0 95.7" stroke="#f8ce2e" stroke-width="1.5" fill="none" stroke-linecap="round" opacity=".75"/>
<path d="M154.0 -2.0 154.6 11.3 155.2 22.6" stroke="#f8a636" stroke-width="5.8" fill="none"/>
<path d="M155.2 22.6L156.2 40.9L157.3 59.1L158.6 77.3L159.9 95.6" stroke="#c68c08" stroke-width="6.4" fill="none" stroke-linecap="round"/>
<path d="M155.2 22.6L156.2 40.9L157.3 59.1L158.6 77.3L159.9 95.6" stroke="#e4a40e" stroke-width="4.1" fill="none" stroke-linecap="round"/>
<path d="M155.2 22.6L156.2 40.9L157.3 59.1L158.6 77.3L159.9 95.6" stroke="#f4c222" stroke-width="2.0" fill="none" stroke-linecap="round" opacity=".75"/>
<path d="M170.4 -2.0 168.8 8.8 167.6 17.5" stroke="#f4962a" stroke-width="4.4" fill="none"/>
<path d="M167.6 17.5L165.5 36.7L164.6 56.0L164.8 75.2L165.7 94.5" stroke="#c68c08" stroke-width="5.0" fill="none" stroke-linecap="round"/>
<path d="M167.6 17.5L165.5 36.7L164.6 56.0L164.8 75.2L165.7 94.5" stroke="#e8aa10" stroke-width="3.1" fill="none" stroke-linecap="round"/>
<path d="M167.6 17.5L165.5 36.7L164.6 56.0L164.8 75.2L165.7 94.5" stroke="#f8ce2e" stroke-width="1.5" fill="none" stroke-linecap="round" opacity=".75"/>
<path d="M165.3 -2.0 164.9 13.9 164.7 27.7" stroke="#f8a636" stroke-width="6.1" fill="none"/>
<path d="M164.7 27.7L165.1 44.3L166.3 60.9L168.1 77.4L170.2 94.0" stroke="#c68c08" stroke-width="6.7" fill="none" stroke-linecap="round"/>
<path d="M164.7 27.7L165.1 44.3L166.3 60.9L168.1 77.4L170.2 94.0" stroke="#eaae12" stroke-width="4.4" fill="none" stroke-linecap="round"/>
<path d="M164.7 27.7L165.1 44.3L166.3 60.9L168.1 77.4L170.2 94.0" stroke="#f8ce2e" stroke-width="2.1" fill="none" stroke-linecap="round" opacity=".75"/>
<path d="M176.9 -2.0 178.6 14.8 179.7 29.5" stroke="#f4962a" stroke-width="4.4" fill="none"/>
<path d="M179.7 29.5L180.3 45.9L179.9 62.3L178.8 78.7L177.2 95.1" stroke="#c68c08" stroke-width="5.0" fill="none" stroke-linecap="round"/>
<path d="M179.7 29.5L180.3 45.9L179.9 62.3L178.8 78.7L177.2 95.1" stroke="#e8aa10" stroke-width="3.2" fill="none" stroke-linecap="round"/>
<path d="M179.7 29.5L180.3 45.9L179.9 62.3L178.8 78.7L177.2 95.1" stroke="#f4c222" stroke-width="1.5" fill="none" stroke-linecap="round" opacity=".75"/>
<path d="M184.8 -2.0 184.8 10.1 184.7 20.2" stroke="#f8a636" stroke-width="4.4" fill="none"/>
<path d="M184.7 20.2L184.4 38.8L183.8 57.4L182.8 76.0L181.6 94.6" stroke="#c68c08" stroke-width="5.0" fill="none" stroke-linecap="round"/>
<path d="M184.7 20.2L184.4 38.8L183.8 57.4L182.8 76.0L181.6 94.6" stroke="#eaae12" stroke-width="3.2" fill="none" stroke-linecap="round"/>
<path d="M184.7 20.2L184.4 38.8L183.8 57.4L182.8 76.0L181.6 94.6" stroke="#f8ce2e" stroke-width="1.5" fill="none" stroke-linecap="round" opacity=".75"/>
<path d="M192.0 -2.0 192.3 12.7 192.3 25.4" stroke="#f8a636" stroke-width="5.8" fill="none"/>
<path d="M192.3 25.4L191.8 42.6L190.4 59.7L188.3 76.9L185.7 94.0" stroke="#c68c08" stroke-width="6.4" fill="none" stroke-linecap="round"/>
<path d="M192.3 25.4L191.8 42.6L190.4 59.7L188.3 76.9L185.7 94.0" stroke="#e8aa10" stroke-width="4.2" fill="none" stroke-linecap="round"/>
<path d="M192.3 25.4L191.8 42.6L190.4 59.7L188.3 76.9L185.7 94.0" stroke="#f4c222" stroke-width="2.0" fill="none" stroke-linecap="round" opacity=".75"/>
<path d="M191.7 -2.0 191.9 14.8 192.0 29.6" stroke="#f28e24" stroke-width="5.3" fill="none"/>
<path d="M192.0 29.6L192.1 46.3L192.0 63.0L191.7 79.8L191.4 96.5" stroke="#c68c08" stroke-width="5.9" fill="none" stroke-linecap="round"/>
<path d="M192.0 29.6L192.1 46.3L192.0 63.0L191.7 79.8L191.4 96.5" stroke="#e4a40e" stroke-width="3.8" fill="none" stroke-linecap="round"/>
<path d="M192.0 29.6L192.1 46.3L192.0 63.0L191.7 79.8L191.4 96.5" stroke="#f8ce2e" stroke-width="1.8" fill="none" stroke-linecap="round" opacity=".75"/>
<path d="M195.3 -2.0 195.5 8.1 195.7 16.3" stroke="#f4962a" stroke-width="4.6" fill="none"/>
<path d="M195.7 16.3L196.2 36.0L196.6 55.8L196.8 75.6L197.0 95.4" stroke="#c68c08" stroke-width="5.2" fill="none" stroke-linecap="round"/>
<path d="M195.7 16.3L196.2 36.0L196.6 55.8L196.8 75.6L197.0 95.4" stroke="#eaae12" stroke-width="3.3" fill="none" stroke-linecap="round"/>
<path d="M195.7 16.3L196.2 36.0L196.6 55.8L196.8 75.6L197.0 95.4" stroke="#f4c222" stroke-width="1.6" fill="none" stroke-linecap="round" opacity=".75"/>
<path d="M197.2 -2.0 196.6 15.2 196.4 30.3" stroke="#f28e24" stroke-width="4.5" fill="none"/>
<path d="M196.4 30.3L196.8 47.3L198.0 64.2L200.0 81.2L202.4 98.1" stroke="#c68c08" stroke-width="5.1" fill="none" stroke-linecap="round"/>
<path d="M196.4 30.3L196.8 47.3L198.0 64.2L200.0 81.2L202.4 98.1" stroke="#ecb214" stroke-width="3.2" fill="none" stroke-linecap="round"/>
<path d="M196.4 30.3L196.8 47.3L198.0 64.2L200.0 81.2L202.4 98.1" stroke="#f8ce2e" stroke-width="1.5" fill="none" stroke-linecap="round" opacity=".75"/>
<path d="M211.8 -2.0 210.7 14.9 209.9 29.7" stroke="#f28e24" stroke-width="4.4" fill="none"/>
<path d="M209.9 29.7L209.0 47.2L208.3 64.6L207.9 82.0L207.5 99.5" stroke="#c68c08" stroke-width="5.0" fill="none" stroke-linecap="round"/>
<path d="M209.9 29.7L209.0 47.2L208.3 64.6L207.9 82.0L207.5 99.5" stroke="#e4a40e" stroke-width="3.2" fill="none" stroke-linecap="round"/>
<path d="M209.9 29.7L209.0 47.2L208.3 64.6L207.9 82.0L207.5 99.5" stroke="#f4c222" stroke-width="1.5" fill="none" stroke-linecap="round" opacity=".75"/>
<path d="M216.5 -2.0 217.1 11.7 217.4 23.4" stroke="#f08820" stroke-width="4.6" fill="none"/>
<path d="M217.4 23.4L217.4 42.6L216.5 61.8L214.6 81.0L212.2 100.2" stroke="#c68c08" stroke-width="5.2" fill="none" stroke-linecap="round"/>
<path d="M217.4 23.4L217.4 42.6L216.5 61.8L214.6 81.0L212.2 100.2" stroke="#eaae12" stroke-width="3.3" fill="none" stroke-linecap="round"/>
<path d="M217.4 23.4L217.4 42.6L216.5 61.8L214.6 81.0L212.2 100.2" stroke="#f4c222" stroke-width="1.6" fill="none" stroke-linecap="round" opacity=".75"/>
<path d="M210.2 -2.0 210.4 11.9 210.7 23.7" stroke="#f4962a" stroke-width="6.1" fill="none"/>
<path d="M210.7 23.7L211.4 43.3L212.7 62.8L214.6 82.4L216.8 102.0" stroke="#c68c08" stroke-width="6.7" fill="none" stroke-linecap="round"/>
<path d="M210.7 23.7L211.4 43.3L212.7 62.8L214.6 82.4L216.8 102.0" stroke="#ecb214" stroke-width="4.4" fill="none" stroke-linecap="round"/>
<path d="M210.7 23.7L211.4 43.3L212.7 62.8L214.6 82.4L216.8 102.0" stroke="#f6c826" stroke-width="2.1" fill="none" stroke-linecap="round" opacity=".75"/>
<path d="M220.7 -2.0 221.5 9.5 222.2 19.0" stroke="#f28e24" stroke-width="4.8" fill="none"/>
<path d="M222.2 19.0L223.5 40.5L224.1 62.0L224.2 83.5L223.9 105.0" stroke="#c68c08" stroke-width="5.4" fill="none" stroke-linecap="round"/>
<path d="M222.2 19.0L223.5 40.5L224.1 62.0L224.2 83.5L223.9 105.0" stroke="#eaae12" stroke-width="3.5" fill="none" stroke-linecap="round"/>
<path d="M222.2 19.0L223.5 40.5L224.1 62.0L224.2 83.5L223.9 105.0" stroke="#f4c222" stroke-width="1.6" fill="none" stroke-linecap="round" opacity=".75"/>
<path d="M224.3 -2.0 225.2 15.0 225.9 30.0" stroke="#f6a030" stroke-width="4.6" fill="none"/>
<path d="M225.9 30.0L226.9 49.3L227.8 68.6L228.8 87.9L229.7 107.3" stroke="#c68c08" stroke-width="5.2" fill="none" stroke-linecap="round"/>
<path d="M225.9 30.0L226.9 49.3L227.8 68.6L228.8 87.9L229.7 107.3" stroke="#e8aa10" stroke-width="3.3" fill="none" stroke-linecap="round"/>
<path d="M225.9 30.0L226.9 49.3L227.8 68.6L228.8 87.9L229.7 107.3" stroke="#f8ce2e" stroke-width="1.6" fill="none" stroke-linecap="round" opacity=".75"/>
<path d="M232.8 -2.0 232.8 13.4 232.8 26.7" stroke="#f8a636" stroke-width="5.9" fill="none"/>
<path d="M232.8 26.7L233.0 47.7L233.3 68.6L233.9 89.6L234.5 110.5" stroke="#c68c08" stroke-width="6.5" fill="none" stroke-linecap="round"/>
<path d="M232.8 26.7L233.0 47.7L233.3 68.6L233.9 89.6L234.5 110.5" stroke="#eaae12" stroke-width="4.3" fill="none" stroke-linecap="round"/>
<path d="M232.8 26.7L233.0 47.7L233.3 68.6L233.9 89.6L234.5 110.5" stroke="#f6c826" stroke-width="2.0" fill="none" stroke-linecap="round" opacity=".75"/>
<path d="M241.7 -2.0 240.6 17.0 239.8 34.0" stroke="#f28e24" stroke-width="4.4" fill="none"/>
<path d="M239.8 34.0L239.4 53.7L239.5 73.5L240.1 93.2L241.1 113.0" stroke="#c68c08" stroke-width="5.0" fill="none" stroke-linecap="round"/>
<path d="M239.8 34.0L239.4 53.7L239.5 73.5L240.1 93.2L241.1 113.0" stroke="#eaae12" stroke-width="3.2" fill="none" stroke-linecap="round"/>
<path d="M239.8 34.0L239.4 53.7L239.5 73.5L240.1 93.2L241.1 113.0" stroke="#f8ce2e" stroke-width="1.5" fill="none" stroke-linecap="round" opacity=".75"/>
<path d="M252.5 -2.0 252.1 12.5 251.8 25.0" stroke="#f6a030" stroke-width="4.6" fill="none"/>
<path d="M251.8 25.0L250.9 47.5L249.8 70.0L248.3 92.5L246.7 115.0" stroke="#c68c08" stroke-width="5.2" fill="none" stroke-linecap="round"/>
<path d="M251.8 25.0L250.9 47.5L249.8 70.0L248.3 92.5L246.7 115.0" stroke="#e8aa10" stroke-width="3.3" fill="none" stroke-linecap="round"/>
<path d="M251.8 25.0L250.9 47.5L249.8 70.0L248.3 92.5L246.7 115.0" stroke="#f4c222" stroke-width="1.6" fill="none" stroke-linecap="round" opacity=".75"/>
<path d="M246.8 -2.0 248.6 18.3 250.0 36.6" stroke="#f28e24" stroke-width="5.7" fill="none"/>
<path d="M250.0 36.6L251.0 56.5L251.5 76.5L251.6 96.4L251.3 116.3" stroke="#c68c08" stroke-width="6.3" fill="none" stroke-linecap="round"/>
<path d="M250.0 36.6L251.0 56.5L251.5 76.5L251.6 96.4L251.3 116.3" stroke="#ecb214" stroke-width="4.1" fill="none" stroke-linecap="round"/>
<path d="M250.0 36.6L251.0 56.5L251.5 76.5L251.6 96.4L251.3 116.3" stroke="#f6c826" stroke-width="2.0" fill="none" stroke-linecap="round" opacity=".75"/>
<path d="M251.3 -2.0 251.8 13.6 252.2 27.3" stroke="#f08820" stroke-width="4.8" fill="none"/>
<path d="M252.2 27.3L253.1 50.1L254.2 72.9L255.6 95.7L257.2 118.5" stroke="#c68c08" stroke-width="5.4" fill="none" stroke-linecap="round"/>
<path d="M252.2 27.3L253.1 50.1L254.2 72.9L255.6 95.7L257.2 118.5" stroke="#e4a40e" stroke-width="3.5" fill="none" stroke-linecap="round"/>
<path d="M252.2 27.3L253.1 50.1L254.2 72.9L255.6 95.7L257.2 118.5" stroke="#f8ce2e" stroke-width="1.6" fill="none" stroke-linecap="round" opacity=".75"/>
<path d="M260.2 -2.0 261.0 14.1 261.5 28.3" stroke="#f4962a" stroke-width="4.4" fill="none"/>
<path d="M261.5 28.3L262.2 50.9L262.4 73.6L262.1 96.2L261.7 118.9" stroke="#c68c08" stroke-width="5.0" fill="none" stroke-linecap="round"/>
<path d="M261.5 28.3L262.2 50.9L262.4 73.6L262.1 96.2L261.7 118.9" stroke="#ecb214" stroke-width="3.2" fill="none" stroke-linecap="round"/>
<path d="M261.5 28.3L262.2 50.9L262.4 73.6L262.1 96.2L261.7 118.9" stroke="#f6c826" stroke-width="1.5" fill="none" stroke-linecap="round" opacity=".75"/>
<path d="M271.2 -2.0 270.1 16.3 269.1 32.7" stroke="#f8a636" stroke-width="4.7" fill="none"/>
<path d="M269.1 32.7L268.1 54.2L267.3 75.7L266.9 97.1L266.6 118.6" stroke="#c68c08" stroke-width="5.3" fill="none" stroke-linecap="round"/>
<path d="M269.1 32.7L268.1 54.2L267.3 75.7L266.9 97.1L266.6 118.6" stroke="#f0b818" stroke-width="3.4" fill="none" stroke-linecap="round"/>
<path d="M269.1 32.7L268.1 54.2L267.3 75.7L266.9 97.1L266.6 118.6" stroke="#f8ce2e" stroke-width="1.6" fill="none" stroke-linecap="round" opacity=".75"/>
<path d="M276.2 -2.0 275.3 20.3 274.5 40.6" stroke="#f4962a" stroke-width="4.9" fill="none"/>
<path d="M274.5 40.6L273.8 60.5L273.1 80.3L272.5 100.2L271.8 120.0" stroke="#c68c08" stroke-width="5.5" fill="none" stroke-linecap="round"/>
<path d="M274.5 40.6L273.8 60.5L273.1 80.3L272.5 100.2L271.8 120.0" stroke="#ecb214" stroke-width="3.6" fill="none" stroke-linecap="round"/>
<path d="M274.5 40.6L273.8 60.5L273.1 80.3L272.5 100.2L271.8 120.0" stroke="#f8ce2e" stroke-width="1.7" fill="none" stroke-linecap="round" opacity=".75"/>
<path d="M277.0 -2.0 275.7 21.5 275.0 42.9" stroke="#f4962a" stroke-width="6.1" fill="none"/>
<path d="M275.0 42.9L274.8 61.9L275.2 80.9L276.0 99.9L277.1 118.8" stroke="#c68c08" stroke-width="6.7" fill="none" stroke-linecap="round"/>
<path d="M275.0 42.9L274.8 61.9L275.2 80.9L276.0 99.9L277.1 118.8" stroke="#e8aa10" stroke-width="4.4" fill="none" stroke-linecap="round"/>
<path d="M275.0 42.9L274.8 61.9L275.2 80.9L276.0 99.9L277.1 118.8" stroke="#f6c826" stroke-width="2.1" fill="none" stroke-linecap="round" opacity=".75"/>
<path d="M289.8 -2.0 286.8 22.8 284.7 45.7" stroke="#f4962a" stroke-width="5.3" fill="none"/>
<path d="M284.7 45.7L283.6 64.1L283.1 82.6L283.2 101.1L283.6 119.5" stroke="#c68c08" stroke-width="5.9" fill="none" stroke-linecap="round"/>
<path d="M284.7 45.7L283.6 64.1L283.1 82.6L283.2 101.1L283.6 119.5" stroke="#e8aa10" stroke-width="3.9" fill="none" stroke-linecap="round"/>
<path d="M284.7 45.7L283.6 64.1L283.1 82.6L283.2 101.1L283.6 119.5" stroke="#f8ce2e" stroke-width="1.8" fill="none" stroke-linecap="round" opacity=".75"/>
<path d="M287.5 -2.0 287.8 22.0 288.2 44.0" stroke="#f8a636" stroke-width="4.6" fill="none"/>
<path d="M288.2 44.0L288.6 62.6L289.0 81.2L289.4 99.8L289.9 118.4" stroke="#c68c08" stroke-width="5.2" fill="none" stroke-linecap="round"/>
<path d="M288.2 44.0L288.6 62.6L289.0 81.2L289.4 99.8L289.9 118.4" stroke="#f0b818" stroke-width="3.3" fill="none" stroke-linecap="round"/>
<path d="M288.2 44.0L288.6 62.6L289.0 81.2L289.4 99.8L289.9 118.4" stroke="#f4c222" stroke-width="1.6" fill="none" stroke-linecap="round" opacity=".75"/>
<path d="M296.4 -2.0 294.3 19.8 292.8 39.5" stroke="#f28e24" stroke-width="6.0" fill="none"/>
<path d="M292.8 39.5L292.1 59.0L292.2 78.6L293.1 98.1L294.3 117.6" stroke="#c68c08" stroke-width="6.6" fill="none" stroke-linecap="round"/>
<path d="M292.8 39.5L292.1 59.0L292.2 78.6L293.1 98.1L294.3 117.6" stroke="#e8aa10" stroke-width="4.3" fill="none" stroke-linecap="round"/>
<path d="M292.8 39.5L292.1 59.0L292.2 78.6L293.1 98.1L294.3 117.6" stroke="#f4c222" stroke-width="2.0" fill="none" stroke-linecap="round" opacity=".75"/>
<path d="M300.0 -2.0 299.0 23.1 298.5 46.1" stroke="#f28e24" stroke-width="4.7" fill="none"/>
<path d="M298.5 46.1L298.6 64.2L299.1 82.2L300.1 100.3L301.3 118.4" stroke="#c68c08" stroke-width="5.3" fill="none" stroke-linecap="round"/>
<path d="M298.5 46.1L298.6 64.2L299.1 82.2L300.1 100.3L301.3 118.4" stroke="#ecb214" stroke-width="3.4" fill="none" stroke-linecap="round"/>
<path d="M298.5 46.1L298.6 64.2L299.1 82.2L300.1 100.3L301.3 118.4" stroke="#f8ce2e" stroke-width="1.6" fill="none" stroke-linecap="round" opacity=".75"/>
<path d="M299.8 -2.0 302.3 20.6 304.2 41.2" stroke="#f08820" stroke-width="5.7" fill="none"/>
<path d="M304.2 41.2L305.4 60.8L306.0 80.3L306.1 99.8L305.9 119.4" stroke="#c68c08" stroke-width="6.3" fill="none" stroke-linecap="round"/>
<path d="M304.2 41.2L305.4 60.8L306.0 80.3L306.1 99.8L305.9 119.4" stroke="#eaae12" stroke-width="4.1" fill="none" stroke-linecap="round"/>
<path d="M304.2 41.2L305.4 60.8L306.0 80.3L306.1 99.8L305.9 119.4" stroke="#f8ce2e" stroke-width="1.9" fill="none" stroke-linecap="round" opacity=".75"/>
<path d="M310.3 -2.0 311.9 23.1 313.0 46.1" stroke="#f6a030" stroke-width="4.6" fill="none"/>
<path d="M313.0 46.1L313.5 64.0L313.5 81.9L313.2 99.7L312.7 117.6" stroke="#c68c08" stroke-width="5.2" fill="none" stroke-linecap="round"/>
<path d="M313.0 46.1L313.5 64.0L313.5 81.9L313.2 99.7L312.7 117.6" stroke="#ecb214" stroke-width="3.3" fill="none" stroke-linecap="round"/>
<path d="M313.0 46.1L313.5 64.0L313.5 81.9L313.2 99.7L312.7 117.6" stroke="#f8ce2e" stroke-width="1.6" fill="none" stroke-linecap="round" opacity=".75"/>
<path d="M324.7 -2.0 322.1 20.6 320.1 41.2" stroke="#f6a030" stroke-width="6.0" fill="none"/>
<path d="M320.1 41.2L318.8 60.7L318.2 80.2L318.1 99.7L318.4 119.2" stroke="#c68c08" stroke-width="6.6" fill="none" stroke-linecap="round"/>
<path d="M320.1 41.2L318.8 60.7L318.2 80.2L318.1 99.7L318.4 119.2" stroke="#eaae12" stroke-width="4.3" fill="none" stroke-linecap="round"/>
<path d="M320.1 41.2L318.8 60.7L318.2 80.2L318.1 99.7L318.4 119.2" stroke="#f8ce2e" stroke-width="2.0" fill="none" stroke-linecap="round" opacity=".75"/>
<path d="M320.5 -2.0 320.1 23.0 320.2 45.9" stroke="#f28e24" stroke-width="5.0" fill="none"/>
<path d="M320.2 45.9L320.8 64.0L321.9 82.0L323.3 100.1L324.9 118.1" stroke="#c68c08" stroke-width="5.6" fill="none" stroke-linecap="round"/>
<path d="M320.2 45.9L320.8 64.0L321.9 82.0L323.3 100.1L324.9 118.1" stroke="#ecb214" stroke-width="3.6" fill="none" stroke-linecap="round"/>
<path d="M320.2 45.9L320.8 64.0L321.9 82.0L323.3 100.1L324.9 118.1" stroke="#f4c222" stroke-width="1.7" fill="none" stroke-linecap="round" opacity=".75"/>
<path d="M335.1 -2.0 336.0 20.9 336.3 41.9" stroke="#f8a636" stroke-width="4.3" fill="none"/>
<path d="M336.3 41.9L335.8 60.9L334.4 79.9L332.3 98.9L329.7 117.9" stroke="#c68c08" stroke-width="4.9" fill="none" stroke-linecap="round"/>
<path d="M336.3 41.9L335.8 60.9L334.4 79.9L332.3 98.9L329.7 117.9" stroke="#ecb214" stroke-width="3.1" fill="none" stroke-linecap="round"/>
<path d="M336.3 41.9L335.8 60.9L334.4 79.9L332.3 98.9L329.7 117.9" stroke="#f6c826" stroke-width="1.5" fill="none" stroke-linecap="round" opacity=".75"/>
<path d="M332.4 -2.0 331.6 27.2 331.6 54.5" stroke="#f08820" stroke-width="4.7" fill="none"/>
<path d="M331.6 54.5L332.1 70.3L332.9 86.2L333.9 102.0L335.1 117.8" stroke="#c68c08" stroke-width="5.3" fill="none" stroke-linecap="round"/>
<path d="M331.6 54.5L332.1 70.3L332.9 86.2L333.9 102.0L335.1 117.8" stroke="#eaae12" stroke-width="3.4" fill="none" stroke-linecap="round"/>
<path d="M331.6 54.5L332.1 70.3L332.9 86.2L333.9 102.0L335.1 117.8" stroke="#f6c826" stroke-width="1.6" fill="none" stroke-linecap="round" opacity=".75"/>
<path d="M6.0 38.4C-1.4 24.2 1.8 10.0 6.0 8.0C10.2 10.0 13.4 24.2 6.0 38.4Z" fill="#f27418"/>
<path d="M41.2 25.5C32.2 9.9 36.1 -5.6 41.2 -7.6C46.4 -5.6 50.3 9.9 41.2 25.5Z" fill="#f06a14"/>
<path d="M77.0 19.9C69.6 7.3 72.8 -5.2 77.0 -7.2C81.3 -5.2 84.5 7.3 77.0 19.9Z" fill="#f27418"/>
<path d="M111.4 20.5C104.4 9.5 107.4 -1.6 111.4 -3.6C115.4 -1.6 118.4 9.5 111.4 20.5Z" fill="#ee6410"/>
<path d="M144.2 31.2C135.2 17.1 139.1 3.1 144.2 1.1C149.4 3.1 153.2 17.1 144.2 31.2Z" fill="#f06a14"/>
<path d="M178.4 35.3C171.9 19.4 174.7 3.6 178.4 1.6C182.1 3.6 184.9 19.4 178.4 35.3Z" fill="#f06a14"/>
<path d="M208.6 42.8C201.2 26.2 204.4 9.5 208.6 7.5C212.8 9.5 216.0 26.2 208.6 42.8Z" fill="#f47c20"/>
<path d="M241.3 31.1C233.8 16.5 237.0 1.9 241.3 -0.1C245.6 1.9 248.8 16.5 241.3 31.1Z" fill="#ee6410"/>
<path d="M273.7 27.7C266.4 13.2 269.5 -1.4 273.7 -3.4C277.9 -1.4 281.0 13.2 273.7 27.7Z" fill="#ee6410"/>
<path d="M306.7 24.1C298.4 11.4 301.9 -1.3 306.7 -3.3C311.4 -1.3 315.0 11.4 306.7 24.1Z" fill="#f06a14"/>
<path d="M195.4 60.9q1.500 11.1 -.5 22.2" stroke="#6a3c04" stroke-width="2.3" fill="none" stroke-linecap="round" opacity=".7"/>
<path d="M22.2 44.4q1.500 11.0 -.5 22.0" stroke="#6a3c04" stroke-width="2.1" fill="none" stroke-linecap="round" opacity=".7"/>
<path d="M240.0 44.6q1.500 15.0 -.5 30.0" stroke="#6a3c04" stroke-width="1.6" fill="none" stroke-linecap="round" opacity=".7"/>
<path d="M238.7 41.0q1.500 14.6 -.5 29.1" stroke="#6a3c04" stroke-width="1.3" fill="none" stroke-linecap="round" opacity=".7"/>
<path d="M37.0 70.1q1.500 16.1 -.5 32.2" stroke="#6a3c04" stroke-width="1.4" fill="none" stroke-linecap="round" opacity=".7"/>
<path d="M317.0 40.7q1.500 14.1 -.5 28.1" stroke="#6a3c04" stroke-width="1.3" fill="none" stroke-linecap="round" opacity=".7"/>
<path d="M140.6 34.1q1.500 15.6 -.5 31.2" stroke="#6a3c04" stroke-width="1.8" fill="none" stroke-linecap="round" opacity=".7"/>
<path d="M55.3 46.9q1.500 8.4 -.5 16.8" stroke="#6a3c04" stroke-width="1.9" fill="none" stroke-linecap="round" opacity=".7"/>
<path d="M200.3 61.3q1.500 13.8 -.5 27.6" stroke="#6a3c04" stroke-width="1.8" fill="none" stroke-linecap="round" opacity=".7"/>
<path d="M246.8 70.4q1.500 8.4 -.5 16.7" stroke="#6a3c04" stroke-width="1.7" fill="none" stroke-linecap="round" opacity=".7"/>
<path d="M46.9 53.0q1.500 12.0 -.5 24.1" stroke="#6a3c04" stroke-width="1.7" fill="none" stroke-linecap="round" opacity=".7"/>
<path d="M66.8 42.5q1.500 9.4 -.5 18.8" stroke="#6a3c04" stroke-width="2.7" fill="none" stroke-linecap="round" opacity=".7"/>
<path d="M168.2 62.0q1.500 9.0 -.5 17.9" stroke="#6a3c04" stroke-width="2.3" fill="none" stroke-linecap="round" opacity=".7"/>
<path d="M209.2 28.5q1.500 9.6 -.5 19.2" stroke="#6a3c04" stroke-width="1.2" fill="none" stroke-linecap="round" opacity=".7"/>
<path d="M17.4 39.6q1.500 9.8 -.5 19.6" stroke="#6a3c04" stroke-width="2.4" fill="none" stroke-linecap="round" opacity=".7"/>
<path d="M301.7 36.4q1.500 9.3 -.5 18.7" stroke="#6a3c04" stroke-width="2.8" fill="none" stroke-linecap="round" opacity=".7"/>
<path d="M162.3 46.4q1.500 10.4 -.5 20.8" stroke="#6a3c04" stroke-width="2.0" fill="none" stroke-linecap="round" opacity=".7"/>
<path d="M48.3 73.2q1.500 15.0 -.5 30.0" stroke="#6a3c04" stroke-width="1.9" fill="none" stroke-linecap="round" opacity=".7"/>
<path d="M272.2 71.6q1.500 14.7 -.5 29.4" stroke="#6a3c04" stroke-width="1.9" fill="none" stroke-linecap="round" opacity=".7"/>
<path d="M247.9 48.3q1.500 8.5 -.5 17.0" stroke="#6a3c04" stroke-width="1.4" fill="none" stroke-linecap="round" opacity=".7"/>
<path d="M276.8 59.0q1.500 9.9 -.5 19.8" stroke="#6a3c04" stroke-width="2.4" fill="none" stroke-linecap="round" opacity=".7"/>
<path d="M273.5 37.6q1.500 13.5 -.5 27.1" stroke="#6a3c04" stroke-width="2.1" fill="none" stroke-linecap="round" opacity=".7"/>
<path d="M155.2 44.9q1.500 12.4 -.5 24.9" stroke="#6a3c04" stroke-width="1.9" fill="none" stroke-linecap="round" opacity=".7"/>
<path d="M272.6 28.5q1.500 10.1 -.5 20.2" stroke="#6a3c04" stroke-width="2.7" fill="none" stroke-linecap="round" opacity=".7"/>
<path d="M201.2 64.1q1.500 11.9 -.5 23.9" stroke="#6a3c04" stroke-width="2.4" fill="none" stroke-linecap="round" opacity=".7"/>
<path d="M111.6 73.8q1.500 9.2 -.5 18.4" stroke="#6a3c04" stroke-width="2.3" fill="none" stroke-linecap="round" opacity=".7"/>
<path d="M228.3 42.5q1.500 12.3 -.5 24.6" stroke="#6a3c04" stroke-width="2.8" fill="none" stroke-linecap="round" opacity=".7"/>
<path d="M153.9 39.5q1.500 16.7 -.5 33.4" stroke="#6a3c04" stroke-width="2.4" fill="none" stroke-linecap="round" opacity=".7"/>
<path d="M172.8 32.4q1.500 15.3 -.5 30.6" stroke="#6a3c04" stroke-width="1.2" fill="none" stroke-linecap="round" opacity=".7"/>
<path d="M0 122H336V136H0z" fill="#c87838"/>
<path d="M50 136L50 123.6L56 122.4L62 121.0L68 119.4L74 117.7L80 115.8L86 114.0L92 112.1L98 110.2L104 108.5L110 106.8L116 105.3L122 104.0L128 102.9L134 102.0L140 101.4L146 101.1L152 101.0L158 101.0L164 101.0L170 101.0L176 101.0L182 101.0L188 101.5L194 102.4L200 103.8L206 105.6L212 107.7L218 110.1L224 112.6L230 115.1L236 117.5L242 119.7L248 121.6L254 123.2L260 124.3L266 124.9L272 125.0L278 125.0L284 125.0L290 136Z" fill="#a8a034"/>
<ellipse cx="150" cy="120" rx="60" ry="10" fill="#bcae3c" opacity=".7"/>
<ellipse cx="215" cy="128" rx="40" ry="6" fill="#8e9230" opacity=".6"/>
<path d="M-4 124.0L0 124.0L4 124.0L8 124.0L12 124.0L16 124.0L20 124.0L24 124.0L28 124.0L32 123.8L36 123.5L40 123.1L44 122.6L48 122.0L52 121.2L56 120.4L60 119.5L64 118.5L68 117.4L72 116.2L76 115.1L80 113.8L84 112.6L88 111.3L92 110.1L96 108.8L100 107.6L104 106.5L108 105.3L112 104.3L116 103.3L120 102.4L124 101.6L128 100.9L132 100.3L136 99.8L140 99.4L144 99.1L148 99.0L152 99.0L156 99.0L160 99.0L164 99.0L168 99.0L172 99.0L176 99.0L180 99.0L184 99.1L188 99.5L192 100.0L196 100.8L200 101.8L204 103.0L208 104.3L212 105.7L216 107.3L220 108.9L224 110.6L228 112.3L232 113.9L236 115.5L240 117.0L244 118.4L248 119.6L252 120.7L256 121.6L260 122.3L264 122.7L268 123.0L272 123.0L276 123.0L280 123.0L284 123.0L288 123.0L292 123.0L296 123.0L300 123.0L304 123.0L308 123.0L312 123.0L316 123.0L320 123.0L324 123.0L328 123.0L332 123.0L336 123.0L340 123.0" stroke="#d88850" stroke-width="12" fill="none" stroke-linejoin="round"/>
<rect x="-1.2" y="119.5" width="6.500" height="9" rx="2" fill="#b4623a" opacity=".8" transform="rotate(0.0 2.0 124.0)"/>
<rect x="6.4" y="119.5" width="6.500" height="9" rx="2" fill="#e09a68" opacity=".8" transform="rotate(0.0 9.6 124.0)"/>
<rect x="14.0" y="119.5" width="6.500" height="9" rx="2" fill="#a85830" opacity=".8" transform="rotate(0.0 17.2 124.0)"/>
<rect x="21.6" y="119.5" width="6.500" height="9" rx="2" fill="#d48858" opacity=".8" transform="rotate(-0.3 24.8 124.0)"/>
<rect x="29.2" y="119.3" width="6.500" height="9" rx="2" fill="#b4623a" opacity=".8" transform="rotate(-3.3 32.4 123.8)"/>
<rect x="36.8" y="118.6" width="6.500" height="9" rx="2" fill="#e09a68" opacity=".8" transform="rotate(-6.6 40.0 123.1)"/>
<rect x="44.4" y="117.5" width="6.500" height="9" rx="2" fill="#a85830" opacity=".8" transform="rotate(-9.6 47.6 122.0)"/>
<rect x="52.0" y="116.1" width="6.500" height="9" rx="2" fill="#d48858" opacity=".8" transform="rotate(-12.2 55.2 120.6)"/>
<rect x="59.6" y="114.3" width="6.500" height="9" rx="2" fill="#b4623a" opacity=".8" transform="rotate(-14.3 62.8 118.8)"/>
<rect x="67.2" y="112.2" width="6.500" height="9" rx="2" fill="#e09a68" opacity=".8" transform="rotate(-15.9 70.4 116.7)"/>
<rect x="74.8" y="110.0" width="6.500" height="9" rx="2" fill="#a85830" opacity=".8" transform="rotate(-17.0 78.0 114.5)"/>
<rect x="82.4" y="107.6" width="6.500" height="9" rx="2" fill="#d48858" opacity=".8" transform="rotate(-17.4 85.6 112.1)"/>
<rect x="90.0" y="105.2" width="6.500" height="9" rx="2" fill="#b4623a" opacity=".8" transform="rotate(-17.3 93.2 109.7)"/>
<rect x="97.6" y="102.9" width="6.500" height="9" rx="2" fill="#e09a68" opacity=".8" transform="rotate(-16.5 100.8 107.4)"/>
<rect x="105.2" y="100.7" width="6.500" height="9" rx="2" fill="#a85830" opacity=".8" transform="rotate(-15.2 108.4 105.2)"/>
<rect x="112.8" y="98.8" width="6.500" height="9" rx="2" fill="#d48858" opacity=".8" transform="rotate(-13.3 116.0 103.3)"/>
<rect x="120.4" y="97.2" width="6.500" height="9" rx="2" fill="#b4623a" opacity=".8" transform="rotate(-10.9 123.6 101.7)"/>
<rect x="128.0" y="95.9" width="6.500" height="9" rx="2" fill="#e09a68" opacity=".8" transform="rotate(-8.1 131.2 100.4)"/>
<rect x="135.6" y="95.0" width="6.500" height="9" rx="2" fill="#a85830" opacity=".8" transform="rotate(-5.0 138.8 99.5)"/>
<rect x="143.2" y="94.6" width="6.500" height="9" rx="2" fill="#d48858" opacity=".8" transform="rotate(-1.6 146.4 99.1)"/>
<rect x="150.8" y="94.5" width="6.500" height="9" rx="2" fill="#b4623a" opacity=".8" transform="rotate(0.0 154.0 99.0)"/>
<rect x="158.4" y="94.5" width="6.500" height="9" rx="2" fill="#e09a68" opacity=".8" transform="rotate(0.0 161.6 99.0)"/>
<rect x="166.0" y="94.5" width="6.500" height="9" rx="2" fill="#a85830" opacity=".8" transform="rotate(0.0 169.2 99.0)"/>
<rect x="173.6" y="94.5" width="6.500" height="9" rx="2" fill="#d48858" opacity=".8" transform="rotate(0.0 176.8 99.0)"/>
<rect x="181.2" y="94.6" width="6.500" height="9" rx="2" fill="#b4623a" opacity=".8" transform="rotate(3.7 184.4 99.1)"/>
<rect x="188.8" y="95.5" width="6.500" height="9" rx="2" fill="#e09a68" opacity=".8" transform="rotate(9.7 192.0 100.0)"/>
<rect x="196.4" y="97.2" width="6.500" height="9" rx="2" fill="#a85830" opacity=".8" transform="rotate(14.8 199.6 101.7)"/>
<rect x="204.0" y="99.5" width="6.500" height="9" rx="2" fill="#d48858" opacity=".8" transform="rotate(18.8 207.2 104.0)"/>
<rect x="211.6" y="102.3" width="6.500" height="9" rx="2" fill="#b4623a" opacity=".8" transform="rotate(21.4 214.8 106.8)"/>
<rect x="219.2" y="105.4" width="6.500" height="9" rx="2" fill="#e09a68" opacity=".8" transform="rotate(22.6 222.4 109.9)"/>
<rect x="226.8" y="108.6" width="6.500" height="9" rx="2" fill="#a85830" opacity=".8" transform="rotate(22.4 230.0 113.1)"/>
<rect x="234.4" y="111.6" width="6.500" height="9" rx="2" fill="#d48858" opacity=".8" transform="rotate(20.7 237.6 116.1)"/>
<rect x="242.0" y="114.3" width="6.500" height="9" rx="2" fill="#b4623a" opacity=".8" transform="rotate(17.7 245.2 118.8)"/>
<rect x="249.6" y="116.4" width="6.500" height="9" rx="2" fill="#e09a68" opacity=".8" transform="rotate(13.3 252.8 120.9)"/>
<rect x="257.2" y="117.8" width="6.500" height="9" rx="2" fill="#a85830" opacity=".8" transform="rotate(7.8 260.4 122.3)"/>
<rect x="264.8" y="118.5" width="6.500" height="9" rx="2" fill="#d48858" opacity=".8" transform="rotate(1.7 268.0 123.0)"/>
<rect x="272.4" y="118.5" width="6.500" height="9" rx="2" fill="#b4623a" opacity=".8" transform="rotate(0.0 275.6 123.0)"/>
<rect x="280.0" y="118.5" width="6.500" height="9" rx="2" fill="#e09a68" opacity=".8" transform="rotate(0.0 283.2 123.0)"/>
<rect x="287.6" y="118.5" width="6.500" height="9" rx="2" fill="#a85830" opacity=".8" transform="rotate(0.0 290.8 123.0)"/>
<rect x="295.2" y="118.5" width="6.500" height="9" rx="2" fill="#d48858" opacity=".8" transform="rotate(0.0 298.4 123.0)"/>
<rect x="302.8" y="118.5" width="6.500" height="9" rx="2" fill="#b4623a" opacity=".8" transform="rotate(0.0 306.0 123.0)"/>
<rect x="310.4" y="118.5" width="6.500" height="9" rx="2" fill="#e09a68" opacity=".8" transform="rotate(0.0 313.6 123.0)"/>
<rect x="318.0" y="118.5" width="6.500" height="9" rx="2" fill="#a85830" opacity=".8" transform="rotate(0.0 321.2 123.0)"/>
<rect x="325.6" y="118.5" width="6.500" height="9" rx="2" fill="#d48858" opacity=".8" transform="rotate(0.0 328.8 123.0)"/>
<rect x="333.2" y="118.5" width="6.500" height="9" rx="2" fill="#b4623a" opacity=".8" transform="rotate(0.0 336.4 123.0)"/>
<path d="M0 134.500C50 133 80 137 130 135.500S220 134 262 136.500 310 133.500 336 134.500" stroke="#80c498" stroke-width="2.400" fill="none"/>
<rect y="136" width="336" height="54" fill="url(#cells)"/>
<path d="M172 152c9-3 8-14 2-20-6-6-12-10-11-18 .6-6 2-9-1-15l-2.200.800c2.500 5 .8 8 .2 13.500-1 9 4 13.500 7.500 19.500 3 5 2 12-3 16.500z" fill="#e8361a"/>
<path d="M160 99c-2-8 2-14-1-22s0-10 1-14M161 97c4-5 9-4 14-8M159 96c-4-4-8-3-12-6" stroke="#e8361a" stroke-width="1.100" fill="none" stroke-linecap="round"/>
<path d="M215 148c7-4 5-12 1-18-4-6-8-10-7-17 .5-5 1-8-2-13l-2 .800c2.500 4.500 1.500 7 1 12-.8 8 2.500 12 5 17 2.500 5 2.500 11-2 15z" fill="#e8361a"/>
<path d="M206 101c-3-7-8-10-8-18s3-12 0-18M206 100c4-4 8-3 11-8M199 80c4-5 10-6 12-12" stroke="#e8361a" stroke-width="1" fill="none" stroke-linecap="round"/>
<path d="M27 157h267v-12h29.500v35H27z" fill="#e81e0a"/>
<rect x="25" y="150.500" width="269" height="25.200" rx="2.500" fill="#fff"/>
<text x="35.500" y="167" font-family="Liberation Sans,sans-serif" font-size="8.600" font-weight="bold" fill="#1a2058" textLength="117.500" lengthAdjust="spacingAndGlyphs">HEMORRAGIA MACULAR</text>
<rect x="247.200" y="96.700" width="71.200" height="43.300" rx="3" fill="#fff"/>
<path d="M247.200 99.700a3 3 0 0 1 3-3h65.200a3 3 0 0 1 3 3v5.600h-71.200z" fill="#ee2a12"/>
<text x="260" y="103.200" font-family="Liberation Sans,sans-serif" font-size="4.400" font-weight="bold" fill="#fff" textLength="48" lengthAdjust="spacingAndGlyphs">ENLACE TELEFONICO</text>
<path d="M250 139.500c0-10 4-14 8-15l6-1 6 1c5 1 8 5 8 15z" fill="#eef0f4"/>
<ellipse cx="264" cy="114" rx="4.300" ry="5.400" fill="#c8967a"/>
<path d="M259.500 113c-.5-7 9.500-7 9 0-1.500-3-7.500-3-9 0z" fill="#241a14"/>
<path d="M262.500 122.500l1.500 12 1.500-12z" fill="#a8c0e0"/>
<text x="280" y="112.200" font-family="Liberation Sans,sans-serif" font-size="3.900" font-weight="bold" fill="#1a2058" textLength="31" lengthAdjust="spacingAndGlyphs">DR. EUGENIO</text>
<text x="280" y="117.800" font-family="Liberation Sans,sans-serif" font-size="3.900" font-weight="bold" fill="#1a2058">MOYA</text>
<text x="280" y="123.400" font-family="Liberation Sans,sans-serif" font-size="2.900" fill="#1a2058" textLength="26" lengthAdjust="spacingAndGlyphs">OFTALMÓLOGO</text>
<text x="280" y="127.600" font-family="Liberation Sans,sans-serif" font-size="2.900" fill="#1a2058" textLength="25" lengthAdjust="spacingAndGlyphs">ESP. EN RETINA</text>
<text x="280" y="131.800" font-family="Liberation Sans,sans-serif" font-size="2.900" fill="#1a2058" textLength="25" lengthAdjust="spacingAndGlyphs">CLÍNICA LA LUZ</text>
<rect x="292" y="137" width="27.600" height="38.700" rx="1.500" fill="#1c3a9a"/>
<path d="M293 145.500h25.600v22.500h-2v2h-21.600v-2h-2z" fill="#fff"/>
<text x="297" y="143.700" font-family="Liberation Sans,sans-serif" font-size="5.800" font-weight="bold" fill="#fff" textLength="17.500" lengthAdjust="spacingAndGlyphs">18:40</text>
<text x="296.500" y="148.700" font-family="Liberation Sans,sans-serif" font-size="1.900" fill="#1a2058">exitosanoticias.pe</text>
<text x="303.500" y="174.800" font-family="Liberation Sans,sans-serif" font-size="2.200" font-weight="bold" fill="#fff">atv</text>
<path d="M296.2 150.8h1.900v1.900h-1.900zM298.1 150.8h1.900v1.900h-1.900zM300.0 150.8h1.900v1.900h-1.900zM305.7 150.8h1.900v1.900h-1.900zM307.6 150.8h1.900v1.900h-1.900zM311.4 150.8h1.900v1.900h-1.900zM313.3 150.8h1.900v1.900h-1.900zM298.1 152.7h1.900v1.900h-1.900zM301.9 152.7h1.900v1.900h-1.900zM305.7 152.7h1.900v1.900h-1.900zM311.4 152.7h1.900v1.900h-1.900zM298.1 154.6h1.900v1.900h-1.900zM301.9 154.6h1.900v1.900h-1.900zM303.8 154.6h1.900v1.900h-1.900zM305.7 154.6h1.900v1.900h-1.900zM309.5 154.6h1.900v1.900h-1.900zM300.0 156.5h1.900v1.900h-1.900zM303.8 156.5h1.900v1.900h-1.900zM309.5 156.5h1.900v1.900h-1.900zM311.4 156.5h1.900v1.900h-1.900zM313.3 156.5h1.900v1.900h-1.900zM298.1 158.4h1.900v1.900h-1.900zM301.9 158.4h1.900v1.900h-1.900zM303.8 158.4h1.900v1.900h-1.900zM305.7 158.4h1.900v1.900h-1.900zM307.6 158.4h1.900v1.900h-1.900zM309.5 158.4h1.900v1.900h-1.900zM311.4 158.4h1.900v1.900h-1.900zM305.7 160.3h1.900v1.900h-1.900zM313.3 160.3h1.900v1.900h-1.900zM298.1 162.2h1.900v1.900h-1.900zM301.9 162.2h1.900v1.900h-1.900zM303.8 162.2h1.900v1.900h-1.900zM305.7 162.2h1.900v1.900h-1.900zM311.4 162.2h1.900v1.900h-1.900zM296.2 164.1h1.900v1.900h-1.900zM298.1 164.1h1.900v1.900h-1.900zM300.0 164.1h1.900v1.900h-1.900zM305.7 164.1h1.900v1.900h-1.900zM309.5 164.1h1.900v1.900h-1.900zM313.3 164.1h1.900v1.900h-1.900zM300.0 166.0h1.900v1.900h-1.900zM303.8 166.0h1.900v1.900h-1.900zM305.7 166.0h1.900v1.900h-1.900zM307.6 166.0h1.900v1.900h-1.900zM309.5 166.0h1.900v1.900h-1.900zM311.4 166.0h1.900v1.900h-1.900zM313.3 166.0h1.900v1.900h-1.900z" fill="#222"/>
<path d="M15.500 9h9.500l-1.500 7.600H13.500z" fill="#4a4a4a"/>
<path d="M25 9h45.500l-2 7.600H23.500z" fill="#ee2414"/>
<path d="M16.800 10.300l5 5M21.800 10.300l-5 5" stroke="#fff" stroke-width="1.200"/>
<text x="26.500" y="14.900" font-family="Liberation Sans,sans-serif" font-size="5.400" font-weight="bold" fill="#fff" textLength="31" lengthAdjust="spacingAndGlyphs">exitosape</text>
<path d="M286 17.500c8-4 22-6.500 32-6.500v13c-12 .5-24 2-32 5z" fill="#f02410"/>
<path d="M286.300 16.800c10-1.300 21-1.800 31.700-1.600v8.600c-11 0-22 .4-31.700 1.200z" fill="#fff"/>
<text x="287.500" y="23.300" font-family="Liberation Sans,sans-serif" font-size="7.600" font-weight="bold" font-style="italic" fill="#1a2eb0" stroke="#1a2eb0" stroke-width=".4" textLength="29" lengthAdjust="spacingAndGlyphs" transform="rotate(-1.500 302 20)">EXITOSA</text>
<path d="M0 .4h336M.4 0v189" stroke="#3a1a04" stroke-width=".9" fill="none" opacity=".6"/>
</g></symbol></defs></svg>
<style>
/* ---------- modal ---------- */
#modal{position:absolute;left:61px;top:100px;width:1229px;height:686px;background:#1f1f1f;border-radius:8px;box-shadow:0 3px 8px rgba(0,0,0,.25)}
#modal .w{color:rgba(255,255,255,.85)}
.mtab{position:absolute;top:52px;height:40px;border:1px solid #303030;border-bottom:none;border-radius:8px 8px 0 0;background:#262626}
.mtab.act{background:#141414;height:41px}
.mtab .ic{top:12px;width:14px;height:14px;stroke-width:1.150}
.mtab .t{top:8px}
.card{position:absolute;top:108px;height:514px;border:1px solid #303030;border-radius:8px;background:#141414}
.card .hd{position:absolute;left:0;top:0;right:0;height:38px;border-bottom:1px solid #303030}
.sel{position:absolute;height:32px;border:1px solid #424242;border-radius:6px;background:#141414}
.sel .t{left:11px;top:4px}
.sel .ic{right:11px;top:11px;width:10px;height:9px;color:rgba(255,255,255,.28);stroke-width:1.100}
.btn{position:absolute;height:32px;border-radius:6px;text-align:center}
</style>
<div id="modal">
  <span class="t T22 w" id="mtitle" style="left:24px;top:21px;font-size:16px;line-height:24px;font-weight:bold">Publicar Link</span>
  <svg class="ic" style="left:1195px;top:22px;width:11.500px;height:11.500px;color:rgba(255,255,255,.7);stroke-width:1.300" viewBox="0 0 13 13"><path d="M.5.500l12 12M12.500.500l-12 12"/></svg>
  <div style="position:absolute;left:24px;top:91px;width:1181px;height:1px;background:#303030"></div>
  <div class="mtab" style="left:413px;width:135px">
    <svg class="ic w" style="left:16px" viewBox="0 0 14 14"><rect x="1" y="1" width="12" height="12" rx="1"/><path d="M10.500 4.200H9.300c-.9 0-1.300.5-1.300 1.300V13M6.300 7.500h3.900"/></svg>
    <span class="t T23 w" style="left:42px">Facebook</span>
    <svg class="ic" style="left:111px;top:15px;width:9px;height:9px;color:rgba(255,255,255,.5);stroke-width:1.1" viewBox="0 0 9 9"><path d="M.5.500l8 8M8.500.500l-8 8"/></svg>
  </div>
  <div class="mtab" style="left:550px;width:137px">
    <svg class="ic w" style="left:17px" viewBox="0 0 14 14"><rect x="1" y="1" width="12" height="12" rx="3"/><circle cx="7" cy="7" r="2.700"/><circle cx="10.300" cy="3.700" r=".4"/></svg>
    <span class="t T24 w" style="left:42px">Instagram</span>
    <svg class="ic" style="left:113px;top:15px;width:9px;height:9px;color:rgba(255,255,255,.5);stroke-width:1.1" viewBox="0 0 9 9"><path d="M.5.500l8 8M8.500.500l-8 8"/></svg>
  </div>
  <div class="mtab act" style="left:689px;width:127px">
    <svg class="ic" style="left:16px;width:15px;color:#dc2410" viewBox="0 0 15 14"><rect x="1" y="2" width="13" height="10" rx="2.500"/><path d="M6.300 5.200v3.600L9.300 7z" fill="#dc2410"/></svg>
    <span class="t T25" style="left:43px;color:#dc2410">Youtube</span>
    <svg class="ic" style="left:103px;top:15px;width:9px;height:9px;color:rgba(255,255,255,.5);stroke-width:1.1" viewBox="0 0 9 9"><path d="M.5.500l8 8M8.500.500l-8 8"/></svg>
  </div>

  <div class="card" style="left:24px;width:785px">
    <div class="hd"></div>
    <span class="t T26 w" id="c1t" style="left:12px;top:8px;font-weight:bold">Datos de publicación</span>
    <span class="t T27 w" id="pa" style="left:624px;top:8px">Publicar Ahora<span style="margin-left:2px">:</span></span>
    <div style="position:absolute;left:727px;top:8px;width:44px;height:22px;border-radius:11px;background:#dc1e0a"><div style="position:absolute;right:2px;top:2px;width:18px;height:18px;border-radius:9px;background:#fff"></div></div>
    <span class="t T28 w" id="res" style="left:12px;top:49px">Resumen</span>
    <div id="ta" style="position:absolute;left:12px;top:79px;width:759px;height:98px;border:1px solid #424242;border-radius:6px;background:#141414">
      <div class="t T29 w" id="tatxt" style="left:11px;top:4px;white-space:normal;width:740px">Te mantenemos siempre al día con las últimas noticias de todo el país. Sigue nuestras redes sociales para mantenerte<br>informado.</div>
      <svg class="ic" style="right:1px;bottom:1px;width:8px;height:8px;color:rgba(255,255,255,.55);stroke-width:1" viewBox="0 0 8 8"><path d="M7.500.500l-7 7M7.500 4.500l-3 3"/></svg>
    </div>
    <span class="t T30" id="cnt" style="right:13px;transform-origin:100% 0;top:176px;color:rgba(255,255,255,.45)">127 / 5000</span>
    <span class="t T31 w" id="opc" style="left:12px;top:203px;font-size:16px;line-height:24px;font-weight:bold">Opciones</span>
    <div style="position:absolute;left:97px;top:214px;width:675px;height:1px;background:#2a2a2a"></div>

    <span class="t T32 w" style="left:12px;top:242px">Tipo de Video</span>
    <div class="sel" style="left:12px;top:272px;width:215px"><span class="t T33 w">Original</span><svg class="ic" viewBox="0 0 10 9"><path d="M.5 1.500 5 7.500l4.500-6"/></svg></div>
    <span class="t T34 w" style="left:235px;top:242px">Audencia</span>
    <div class="sel" style="left:235px;top:272px;width:216px"><span class="t T35 w" id="s2">No es contenido para niños</span><svg class="ic" viewBox="0 0 10 9"><path d="M.5 1.500 5 7.500l4.500-6"/></svg></div>

    <span class="t T36 w" style="left:12px;top:328px">Categoria</span>
    <div class="sel" style="left:12px;top:358px;width:215px"><span class="t T37 w">Cómo hacer y Estilo</span><svg class="ic" viewBox="0 0 10 9"><path d="M.5 1.500 5 7.500l4.500-6"/></svg></div>
    <span class="t T38 w" style="left:235px;top:328px">Calidad</span>
    <div class="sel" style="left:235px;top:358px;width:216px"><span class="t T39 w">480p</span><svg class="ic" viewBox="0 0 10 9"><path d="M.5 1.500 5 7.500l4.500-6"/></svg></div>

    <span class="t T40 w" style="left:12px;top:414px">Privacidad</span>
    <div class="sel" style="left:12px;top:444px;width:215px"><span class="t T41 w">Publico</span><svg class="ic" viewBox="0 0 10 9"><path d="M.5 1.500 5 7.500l4.500-6"/></svg></div>

    <svg style="position:absolute;left:459px;top:242px" width="312" height="175" viewBox="0 0 336 189" preserveAspectRatio="none"><use href="#vid"/></svg>
    <div style="position:absolute;left:466px;top:432px;width:301px;height:4px;border-radius:2px;background:#262626"></div>
    <div style="position:absolute;left:457px;top:427px;width:14px;height:14px;border-radius:7px;border:2px solid #6b1710;background:#1f1f1f"></div>
  </div>

  <div class="card" style="left:817px;width:388px">
    <div class="hd"></div>
    <span class="t T42 w" id="c2t" style="left:12px;top:8px;font-weight:bold">Vista Previa</span>
    <div id="prev" style="position:absolute;left:12px;top:49px;width:362px;height:445px;border-radius:8px;background:#fff;color:rgba(0,0,0,.88)">
      <svg style="position:absolute;left:13px;top:13px" width="336" height="189" viewBox="0 0 336 189"><use href="#vid"/></svg>
      <div style="position:absolute;left:13px;top:222px;width:38px;height:48px;border-radius:50%;background:#bfbfbf"></div>
      <span class="t T43" id="tn" style="left:59px;top:222px;font-weight:bold;font-size:15px">Tu Nota</span>
      <span class="t T44" style="left:59px;top:244px;color:rgba(0,0,0,.45)">718</span>
      <span class="t T45" id="susc" style="left:59px;top:266px;color:rgba(0,0,0,.45)">suscriptores</span>
      <div class="btn" style="left:145px;top:222px;width:104px;background:#ff2a05;color:#fff"><span class="t T46" id="sb" style="left:16px;top:5px">Suscribirme</span></div>
      <div class="btn" style="left:257px;top:222px;width:73px;border:1px solid #d9d9d9;border-radius:6px 0 0 6px">
        <svg class="ic" style="left:15px;top:8px;width:14px;height:14px;stroke-width:1.100" viewBox="0 0 14 14"><path d="M1.200 6.300h2.600v6.500H1.200zM3.800 6.300 6.300 1.200c1.100 0 1.800.7 1.800 1.700 0 .8-.3 1.700-.6 2.500h3.900c.9 0 1.500.8 1.300 1.700l-1 4.500c-.2.700-.8 1.200-1.500 1.200H3.800"/></svg>
        <span class="t T47" style="left:33px;top:4px">781</span>
      </div>
      <div class="btn" style="left:256px;top:254px;width:46px;border:1px solid #d9d9d9;border-radius:0 6px 6px 0">
        <svg class="ic" style="left:15px;top:8px;width:14px;height:14px;stroke-width:1.100;transform:scaleX(-1)" viewBox="0 0 14 14"><path d="M12.800 7.700h-2.600V1.200h2.600zM10.200 7.700 7.700 12.800c-1.100 0-1.800-.7-1.800-1.700 0-.8.300-1.700.6-2.500H2.600c-.9 0-1.500-.8-1.300-1.700l1-4.500c.2-.7.800-1.200 1.500-1.200h6.400"/></svg>
      </div>
      <div style="position:absolute;left:13px;top:300px;width:336px;height:132px;border:1px solid #f0f0f0;border-radius:8px">
        <span class="t T48" id="viz" style="left:12px;top:12px;font-weight:bold">139 K visualizaciones</span>
        <span class="t T49" id="hace" style="left:151px;top:12px;color:rgba(0,0,0,.45)">hace 1 año</span>
        <div class="t T50" id="desc" style="left:12px;top:38px;white-space:nowrap">Te mantenemos siempre al día con las últimas<br>noticias de todo el país. Sigue nuestras redes<br>sociales para mantenerte informado.</div>
      </div>
    </div>
  </div>

  <div class="btn" style="left:1031px;top:634px;width:85px;border:1px solid #424242;background:#141414"><span class="t T51 w" id="can" style="left:15px;top:4px">Cancelar</span></div>
  <div class="btn" style="left:1124px;top:634px;width:81px;background:#dc1e0a"><span class="t T52" id="pub" style="left:16px;top:5px;color:#fff">Publicar</span></div>
</div>
</body></html>
